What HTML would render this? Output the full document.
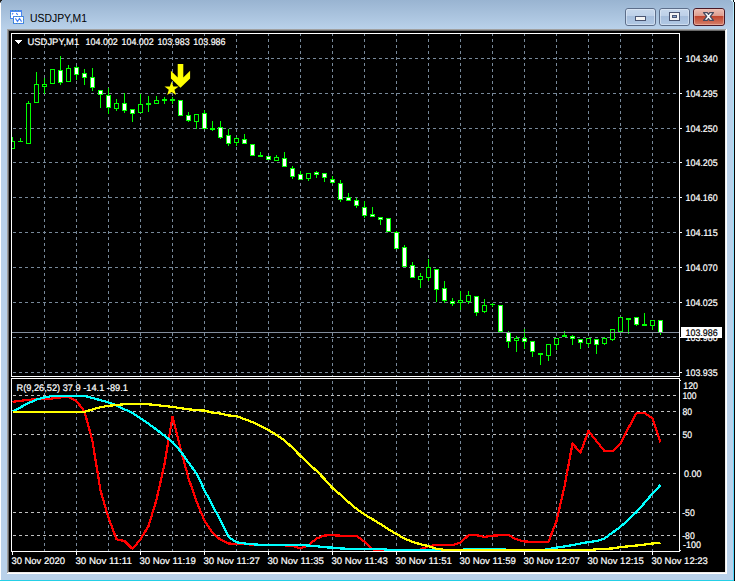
<!DOCTYPE html>
<html><head><meta charset="utf-8"><title>USDJPY,M1</title>
<style>html,body{margin:0;padding:0;background:#fff;overflow:hidden}svg{display:block}text{font-family:"Liberation Sans",sans-serif}</style></head>
<body>
<svg width="737" height="581" viewBox="0 0 737 581" shape-rendering="crispEdges" text-rendering="geometricPrecision">
<defs><linearGradient id="tg" x1="0" y1="0" x2="0" y2="1"><stop offset="0" stop-color="#99b4d1"/><stop offset="1" stop-color="#b9d1ea"/></linearGradient><linearGradient id="bt" x1="0" y1="0" x2="0" y2="1"><stop offset="0" stop-color="#c8d9ed"/><stop offset="0.45" stop-color="#bdd0e8"/><stop offset="0.46" stop-color="#a6bedc"/><stop offset="1" stop-color="#b2c9e5"/></linearGradient><linearGradient id="cl" x1="0" y1="0" x2="0" y2="1"><stop offset="0" stop-color="#edc1b7"/><stop offset="0.45" stop-color="#dd9b8c"/><stop offset="0.46" stop-color="#c1442c"/><stop offset="1" stop-color="#d6846f"/></linearGradient></defs>
<rect x="0" y="0" width="737" height="581" fill="#ffffff"/>
<rect x="0" y="0" width="734" height="581" fill="#b9d1ea"/>
<rect x="0" y="0" width="734" height="29" fill="url(#tg)"/>
<rect x="0" y="2" width="1" height="579" fill="#ffffff"/>
<rect x="0" y="0" width="2" height="1" fill="#202020"/>
<rect x="0" y="1" width="1" height="1" fill="#202020"/>
<rect x="0" y="2" width="1" height="1" fill="#8a8a8a"/>
<linearGradient id="cy" x1="0" y1="0" x2="0" y2="1"><stop offset="0" stop-color="#b8ecfd"/><stop offset="0.5" stop-color="#7fdffc"/><stop offset="1" stop-color="#4fd6fb"/></linearGradient>
<rect x="733" y="2" width="1" height="578" fill="url(#cy)"/>
<rect x="734" y="0" width="3" height="581" fill="#ffffff"/>
<rect x="734" y="2" width="1" height="579" fill="#0a0505"/>
<rect x="733" y="0" width="1" height="2" fill="#0a1a20"/>
<rect x="731" y="0" width="2" height="1" fill="#d8f4fd"/>
<rect x="732" y="1" width="1" height="1" fill="#d8f4fd"/>
<rect x="0" y="580" width="734" height="1" fill="#25cfe6"/>
<rect x="7" y="29" width="720" height="545" fill="#ffffff"/>
<rect x="7" y="29" width="719" height="544" fill="#a0a0a0"/>
<rect x="8" y="30" width="718" height="543" fill="#ececec"/>
<rect x="8" y="30" width="717" height="542" fill="#696969"/>
<rect x="9" y="31" width="716" height="541" fill="#000000"/>
<path d="M13 58h3v1h-3zM19 58h3v1h-3zM25 58h3v1h-3zM31 58h3v1h-3zM37 58h3v1h-3zM43 58h3v1h-3zM49 58h3v1h-3zM55 58h3v1h-3zM61 58h3v1h-3zM67 58h3v1h-3zM73 58h3v1h-3zM79 58h3v1h-3zM85 58h3v1h-3zM91 58h3v1h-3zM97 58h3v1h-3zM103 58h3v1h-3zM109 58h3v1h-3zM115 58h3v1h-3zM121 58h3v1h-3zM127 58h3v1h-3zM133 58h3v1h-3zM139 58h3v1h-3zM145 58h3v1h-3zM151 58h3v1h-3zM157 58h3v1h-3zM163 58h3v1h-3zM169 58h3v1h-3zM175 58h3v1h-3zM181 58h3v1h-3zM187 58h3v1h-3zM193 58h3v1h-3zM199 58h3v1h-3zM205 58h3v1h-3zM211 58h3v1h-3zM217 58h3v1h-3zM223 58h3v1h-3zM229 58h3v1h-3zM235 58h3v1h-3zM241 58h3v1h-3zM247 58h3v1h-3zM253 58h3v1h-3zM259 58h3v1h-3zM265 58h3v1h-3zM271 58h3v1h-3zM277 58h3v1h-3zM283 58h3v1h-3zM289 58h3v1h-3zM295 58h3v1h-3zM301 58h3v1h-3zM307 58h3v1h-3zM313 58h3v1h-3zM319 58h3v1h-3zM325 58h3v1h-3zM331 58h3v1h-3zM337 58h3v1h-3zM343 58h3v1h-3zM349 58h3v1h-3zM355 58h3v1h-3zM361 58h3v1h-3zM367 58h3v1h-3zM373 58h3v1h-3zM379 58h3v1h-3zM385 58h3v1h-3zM391 58h3v1h-3zM397 58h3v1h-3zM403 58h3v1h-3zM409 58h3v1h-3zM415 58h3v1h-3zM421 58h3v1h-3zM427 58h3v1h-3zM433 58h3v1h-3zM439 58h3v1h-3zM445 58h3v1h-3zM451 58h3v1h-3zM457 58h3v1h-3zM463 58h3v1h-3zM469 58h3v1h-3zM475 58h3v1h-3zM481 58h3v1h-3zM487 58h3v1h-3zM493 58h3v1h-3zM499 58h3v1h-3zM505 58h3v1h-3zM511 58h3v1h-3zM517 58h3v1h-3zM523 58h3v1h-3zM529 58h3v1h-3zM535 58h3v1h-3zM541 58h3v1h-3zM547 58h3v1h-3zM553 58h3v1h-3zM559 58h3v1h-3zM565 58h3v1h-3zM571 58h3v1h-3zM577 58h3v1h-3zM583 58h3v1h-3zM589 58h3v1h-3zM595 58h3v1h-3zM601 58h3v1h-3zM607 58h3v1h-3zM613 58h3v1h-3zM619 58h3v1h-3zM625 58h3v1h-3zM631 58h3v1h-3zM637 58h3v1h-3zM643 58h3v1h-3zM649 58h3v1h-3zM655 58h3v1h-3zM661 58h3v1h-3zM667 58h3v1h-3zM673 58h3v1h-3z" fill="#778899"/>
<path d="M13 93h3v1h-3zM19 93h3v1h-3zM25 93h3v1h-3zM31 93h3v1h-3zM37 93h3v1h-3zM43 93h3v1h-3zM49 93h3v1h-3zM55 93h3v1h-3zM61 93h3v1h-3zM67 93h3v1h-3zM73 93h3v1h-3zM79 93h3v1h-3zM85 93h3v1h-3zM91 93h3v1h-3zM97 93h3v1h-3zM103 93h3v1h-3zM109 93h3v1h-3zM115 93h3v1h-3zM121 93h3v1h-3zM127 93h3v1h-3zM133 93h3v1h-3zM139 93h3v1h-3zM145 93h3v1h-3zM151 93h3v1h-3zM157 93h3v1h-3zM163 93h3v1h-3zM169 93h3v1h-3zM175 93h3v1h-3zM181 93h3v1h-3zM187 93h3v1h-3zM193 93h3v1h-3zM199 93h3v1h-3zM205 93h3v1h-3zM211 93h3v1h-3zM217 93h3v1h-3zM223 93h3v1h-3zM229 93h3v1h-3zM235 93h3v1h-3zM241 93h3v1h-3zM247 93h3v1h-3zM253 93h3v1h-3zM259 93h3v1h-3zM265 93h3v1h-3zM271 93h3v1h-3zM277 93h3v1h-3zM283 93h3v1h-3zM289 93h3v1h-3zM295 93h3v1h-3zM301 93h3v1h-3zM307 93h3v1h-3zM313 93h3v1h-3zM319 93h3v1h-3zM325 93h3v1h-3zM331 93h3v1h-3zM337 93h3v1h-3zM343 93h3v1h-3zM349 93h3v1h-3zM355 93h3v1h-3zM361 93h3v1h-3zM367 93h3v1h-3zM373 93h3v1h-3zM379 93h3v1h-3zM385 93h3v1h-3zM391 93h3v1h-3zM397 93h3v1h-3zM403 93h3v1h-3zM409 93h3v1h-3zM415 93h3v1h-3zM421 93h3v1h-3zM427 93h3v1h-3zM433 93h3v1h-3zM439 93h3v1h-3zM445 93h3v1h-3zM451 93h3v1h-3zM457 93h3v1h-3zM463 93h3v1h-3zM469 93h3v1h-3zM475 93h3v1h-3zM481 93h3v1h-3zM487 93h3v1h-3zM493 93h3v1h-3zM499 93h3v1h-3zM505 93h3v1h-3zM511 93h3v1h-3zM517 93h3v1h-3zM523 93h3v1h-3zM529 93h3v1h-3zM535 93h3v1h-3zM541 93h3v1h-3zM547 93h3v1h-3zM553 93h3v1h-3zM559 93h3v1h-3zM565 93h3v1h-3zM571 93h3v1h-3zM577 93h3v1h-3zM583 93h3v1h-3zM589 93h3v1h-3zM595 93h3v1h-3zM601 93h3v1h-3zM607 93h3v1h-3zM613 93h3v1h-3zM619 93h3v1h-3zM625 93h3v1h-3zM631 93h3v1h-3zM637 93h3v1h-3zM643 93h3v1h-3zM649 93h3v1h-3zM655 93h3v1h-3zM661 93h3v1h-3zM667 93h3v1h-3zM673 93h3v1h-3z" fill="#778899"/>
<path d="M13 128h3v1h-3zM19 128h3v1h-3zM25 128h3v1h-3zM31 128h3v1h-3zM37 128h3v1h-3zM43 128h3v1h-3zM49 128h3v1h-3zM55 128h3v1h-3zM61 128h3v1h-3zM67 128h3v1h-3zM73 128h3v1h-3zM79 128h3v1h-3zM85 128h3v1h-3zM91 128h3v1h-3zM97 128h3v1h-3zM103 128h3v1h-3zM109 128h3v1h-3zM115 128h3v1h-3zM121 128h3v1h-3zM127 128h3v1h-3zM133 128h3v1h-3zM139 128h3v1h-3zM145 128h3v1h-3zM151 128h3v1h-3zM157 128h3v1h-3zM163 128h3v1h-3zM169 128h3v1h-3zM175 128h3v1h-3zM181 128h3v1h-3zM187 128h3v1h-3zM193 128h3v1h-3zM199 128h3v1h-3zM205 128h3v1h-3zM211 128h3v1h-3zM217 128h3v1h-3zM223 128h3v1h-3zM229 128h3v1h-3zM235 128h3v1h-3zM241 128h3v1h-3zM247 128h3v1h-3zM253 128h3v1h-3zM259 128h3v1h-3zM265 128h3v1h-3zM271 128h3v1h-3zM277 128h3v1h-3zM283 128h3v1h-3zM289 128h3v1h-3zM295 128h3v1h-3zM301 128h3v1h-3zM307 128h3v1h-3zM313 128h3v1h-3zM319 128h3v1h-3zM325 128h3v1h-3zM331 128h3v1h-3zM337 128h3v1h-3zM343 128h3v1h-3zM349 128h3v1h-3zM355 128h3v1h-3zM361 128h3v1h-3zM367 128h3v1h-3zM373 128h3v1h-3zM379 128h3v1h-3zM385 128h3v1h-3zM391 128h3v1h-3zM397 128h3v1h-3zM403 128h3v1h-3zM409 128h3v1h-3zM415 128h3v1h-3zM421 128h3v1h-3zM427 128h3v1h-3zM433 128h3v1h-3zM439 128h3v1h-3zM445 128h3v1h-3zM451 128h3v1h-3zM457 128h3v1h-3zM463 128h3v1h-3zM469 128h3v1h-3zM475 128h3v1h-3zM481 128h3v1h-3zM487 128h3v1h-3zM493 128h3v1h-3zM499 128h3v1h-3zM505 128h3v1h-3zM511 128h3v1h-3zM517 128h3v1h-3zM523 128h3v1h-3zM529 128h3v1h-3zM535 128h3v1h-3zM541 128h3v1h-3zM547 128h3v1h-3zM553 128h3v1h-3zM559 128h3v1h-3zM565 128h3v1h-3zM571 128h3v1h-3zM577 128h3v1h-3zM583 128h3v1h-3zM589 128h3v1h-3zM595 128h3v1h-3zM601 128h3v1h-3zM607 128h3v1h-3zM613 128h3v1h-3zM619 128h3v1h-3zM625 128h3v1h-3zM631 128h3v1h-3zM637 128h3v1h-3zM643 128h3v1h-3zM649 128h3v1h-3zM655 128h3v1h-3zM661 128h3v1h-3zM667 128h3v1h-3zM673 128h3v1h-3z" fill="#778899"/>
<path d="M13 162h3v1h-3zM19 162h3v1h-3zM25 162h3v1h-3zM31 162h3v1h-3zM37 162h3v1h-3zM43 162h3v1h-3zM49 162h3v1h-3zM55 162h3v1h-3zM61 162h3v1h-3zM67 162h3v1h-3zM73 162h3v1h-3zM79 162h3v1h-3zM85 162h3v1h-3zM91 162h3v1h-3zM97 162h3v1h-3zM103 162h3v1h-3zM109 162h3v1h-3zM115 162h3v1h-3zM121 162h3v1h-3zM127 162h3v1h-3zM133 162h3v1h-3zM139 162h3v1h-3zM145 162h3v1h-3zM151 162h3v1h-3zM157 162h3v1h-3zM163 162h3v1h-3zM169 162h3v1h-3zM175 162h3v1h-3zM181 162h3v1h-3zM187 162h3v1h-3zM193 162h3v1h-3zM199 162h3v1h-3zM205 162h3v1h-3zM211 162h3v1h-3zM217 162h3v1h-3zM223 162h3v1h-3zM229 162h3v1h-3zM235 162h3v1h-3zM241 162h3v1h-3zM247 162h3v1h-3zM253 162h3v1h-3zM259 162h3v1h-3zM265 162h3v1h-3zM271 162h3v1h-3zM277 162h3v1h-3zM283 162h3v1h-3zM289 162h3v1h-3zM295 162h3v1h-3zM301 162h3v1h-3zM307 162h3v1h-3zM313 162h3v1h-3zM319 162h3v1h-3zM325 162h3v1h-3zM331 162h3v1h-3zM337 162h3v1h-3zM343 162h3v1h-3zM349 162h3v1h-3zM355 162h3v1h-3zM361 162h3v1h-3zM367 162h3v1h-3zM373 162h3v1h-3zM379 162h3v1h-3zM385 162h3v1h-3zM391 162h3v1h-3zM397 162h3v1h-3zM403 162h3v1h-3zM409 162h3v1h-3zM415 162h3v1h-3zM421 162h3v1h-3zM427 162h3v1h-3zM433 162h3v1h-3zM439 162h3v1h-3zM445 162h3v1h-3zM451 162h3v1h-3zM457 162h3v1h-3zM463 162h3v1h-3zM469 162h3v1h-3zM475 162h3v1h-3zM481 162h3v1h-3zM487 162h3v1h-3zM493 162h3v1h-3zM499 162h3v1h-3zM505 162h3v1h-3zM511 162h3v1h-3zM517 162h3v1h-3zM523 162h3v1h-3zM529 162h3v1h-3zM535 162h3v1h-3zM541 162h3v1h-3zM547 162h3v1h-3zM553 162h3v1h-3zM559 162h3v1h-3zM565 162h3v1h-3zM571 162h3v1h-3zM577 162h3v1h-3zM583 162h3v1h-3zM589 162h3v1h-3zM595 162h3v1h-3zM601 162h3v1h-3zM607 162h3v1h-3zM613 162h3v1h-3zM619 162h3v1h-3zM625 162h3v1h-3zM631 162h3v1h-3zM637 162h3v1h-3zM643 162h3v1h-3zM649 162h3v1h-3zM655 162h3v1h-3zM661 162h3v1h-3zM667 162h3v1h-3zM673 162h3v1h-3z" fill="#778899"/>
<path d="M13 197h3v1h-3zM19 197h3v1h-3zM25 197h3v1h-3zM31 197h3v1h-3zM37 197h3v1h-3zM43 197h3v1h-3zM49 197h3v1h-3zM55 197h3v1h-3zM61 197h3v1h-3zM67 197h3v1h-3zM73 197h3v1h-3zM79 197h3v1h-3zM85 197h3v1h-3zM91 197h3v1h-3zM97 197h3v1h-3zM103 197h3v1h-3zM109 197h3v1h-3zM115 197h3v1h-3zM121 197h3v1h-3zM127 197h3v1h-3zM133 197h3v1h-3zM139 197h3v1h-3zM145 197h3v1h-3zM151 197h3v1h-3zM157 197h3v1h-3zM163 197h3v1h-3zM169 197h3v1h-3zM175 197h3v1h-3zM181 197h3v1h-3zM187 197h3v1h-3zM193 197h3v1h-3zM199 197h3v1h-3zM205 197h3v1h-3zM211 197h3v1h-3zM217 197h3v1h-3zM223 197h3v1h-3zM229 197h3v1h-3zM235 197h3v1h-3zM241 197h3v1h-3zM247 197h3v1h-3zM253 197h3v1h-3zM259 197h3v1h-3zM265 197h3v1h-3zM271 197h3v1h-3zM277 197h3v1h-3zM283 197h3v1h-3zM289 197h3v1h-3zM295 197h3v1h-3zM301 197h3v1h-3zM307 197h3v1h-3zM313 197h3v1h-3zM319 197h3v1h-3zM325 197h3v1h-3zM331 197h3v1h-3zM337 197h3v1h-3zM343 197h3v1h-3zM349 197h3v1h-3zM355 197h3v1h-3zM361 197h3v1h-3zM367 197h3v1h-3zM373 197h3v1h-3zM379 197h3v1h-3zM385 197h3v1h-3zM391 197h3v1h-3zM397 197h3v1h-3zM403 197h3v1h-3zM409 197h3v1h-3zM415 197h3v1h-3zM421 197h3v1h-3zM427 197h3v1h-3zM433 197h3v1h-3zM439 197h3v1h-3zM445 197h3v1h-3zM451 197h3v1h-3zM457 197h3v1h-3zM463 197h3v1h-3zM469 197h3v1h-3zM475 197h3v1h-3zM481 197h3v1h-3zM487 197h3v1h-3zM493 197h3v1h-3zM499 197h3v1h-3zM505 197h3v1h-3zM511 197h3v1h-3zM517 197h3v1h-3zM523 197h3v1h-3zM529 197h3v1h-3zM535 197h3v1h-3zM541 197h3v1h-3zM547 197h3v1h-3zM553 197h3v1h-3zM559 197h3v1h-3zM565 197h3v1h-3zM571 197h3v1h-3zM577 197h3v1h-3zM583 197h3v1h-3zM589 197h3v1h-3zM595 197h3v1h-3zM601 197h3v1h-3zM607 197h3v1h-3zM613 197h3v1h-3zM619 197h3v1h-3zM625 197h3v1h-3zM631 197h3v1h-3zM637 197h3v1h-3zM643 197h3v1h-3zM649 197h3v1h-3zM655 197h3v1h-3zM661 197h3v1h-3zM667 197h3v1h-3zM673 197h3v1h-3z" fill="#778899"/>
<path d="M13 232h3v1h-3zM19 232h3v1h-3zM25 232h3v1h-3zM31 232h3v1h-3zM37 232h3v1h-3zM43 232h3v1h-3zM49 232h3v1h-3zM55 232h3v1h-3zM61 232h3v1h-3zM67 232h3v1h-3zM73 232h3v1h-3zM79 232h3v1h-3zM85 232h3v1h-3zM91 232h3v1h-3zM97 232h3v1h-3zM103 232h3v1h-3zM109 232h3v1h-3zM115 232h3v1h-3zM121 232h3v1h-3zM127 232h3v1h-3zM133 232h3v1h-3zM139 232h3v1h-3zM145 232h3v1h-3zM151 232h3v1h-3zM157 232h3v1h-3zM163 232h3v1h-3zM169 232h3v1h-3zM175 232h3v1h-3zM181 232h3v1h-3zM187 232h3v1h-3zM193 232h3v1h-3zM199 232h3v1h-3zM205 232h3v1h-3zM211 232h3v1h-3zM217 232h3v1h-3zM223 232h3v1h-3zM229 232h3v1h-3zM235 232h3v1h-3zM241 232h3v1h-3zM247 232h3v1h-3zM253 232h3v1h-3zM259 232h3v1h-3zM265 232h3v1h-3zM271 232h3v1h-3zM277 232h3v1h-3zM283 232h3v1h-3zM289 232h3v1h-3zM295 232h3v1h-3zM301 232h3v1h-3zM307 232h3v1h-3zM313 232h3v1h-3zM319 232h3v1h-3zM325 232h3v1h-3zM331 232h3v1h-3zM337 232h3v1h-3zM343 232h3v1h-3zM349 232h3v1h-3zM355 232h3v1h-3zM361 232h3v1h-3zM367 232h3v1h-3zM373 232h3v1h-3zM379 232h3v1h-3zM385 232h3v1h-3zM391 232h3v1h-3zM397 232h3v1h-3zM403 232h3v1h-3zM409 232h3v1h-3zM415 232h3v1h-3zM421 232h3v1h-3zM427 232h3v1h-3zM433 232h3v1h-3zM439 232h3v1h-3zM445 232h3v1h-3zM451 232h3v1h-3zM457 232h3v1h-3zM463 232h3v1h-3zM469 232h3v1h-3zM475 232h3v1h-3zM481 232h3v1h-3zM487 232h3v1h-3zM493 232h3v1h-3zM499 232h3v1h-3zM505 232h3v1h-3zM511 232h3v1h-3zM517 232h3v1h-3zM523 232h3v1h-3zM529 232h3v1h-3zM535 232h3v1h-3zM541 232h3v1h-3zM547 232h3v1h-3zM553 232h3v1h-3zM559 232h3v1h-3zM565 232h3v1h-3zM571 232h3v1h-3zM577 232h3v1h-3zM583 232h3v1h-3zM589 232h3v1h-3zM595 232h3v1h-3zM601 232h3v1h-3zM607 232h3v1h-3zM613 232h3v1h-3zM619 232h3v1h-3zM625 232h3v1h-3zM631 232h3v1h-3zM637 232h3v1h-3zM643 232h3v1h-3zM649 232h3v1h-3zM655 232h3v1h-3zM661 232h3v1h-3zM667 232h3v1h-3zM673 232h3v1h-3z" fill="#778899"/>
<path d="M13 267h3v1h-3zM19 267h3v1h-3zM25 267h3v1h-3zM31 267h3v1h-3zM37 267h3v1h-3zM43 267h3v1h-3zM49 267h3v1h-3zM55 267h3v1h-3zM61 267h3v1h-3zM67 267h3v1h-3zM73 267h3v1h-3zM79 267h3v1h-3zM85 267h3v1h-3zM91 267h3v1h-3zM97 267h3v1h-3zM103 267h3v1h-3zM109 267h3v1h-3zM115 267h3v1h-3zM121 267h3v1h-3zM127 267h3v1h-3zM133 267h3v1h-3zM139 267h3v1h-3zM145 267h3v1h-3zM151 267h3v1h-3zM157 267h3v1h-3zM163 267h3v1h-3zM169 267h3v1h-3zM175 267h3v1h-3zM181 267h3v1h-3zM187 267h3v1h-3zM193 267h3v1h-3zM199 267h3v1h-3zM205 267h3v1h-3zM211 267h3v1h-3zM217 267h3v1h-3zM223 267h3v1h-3zM229 267h3v1h-3zM235 267h3v1h-3zM241 267h3v1h-3zM247 267h3v1h-3zM253 267h3v1h-3zM259 267h3v1h-3zM265 267h3v1h-3zM271 267h3v1h-3zM277 267h3v1h-3zM283 267h3v1h-3zM289 267h3v1h-3zM295 267h3v1h-3zM301 267h3v1h-3zM307 267h3v1h-3zM313 267h3v1h-3zM319 267h3v1h-3zM325 267h3v1h-3zM331 267h3v1h-3zM337 267h3v1h-3zM343 267h3v1h-3zM349 267h3v1h-3zM355 267h3v1h-3zM361 267h3v1h-3zM367 267h3v1h-3zM373 267h3v1h-3zM379 267h3v1h-3zM385 267h3v1h-3zM391 267h3v1h-3zM397 267h3v1h-3zM403 267h3v1h-3zM409 267h3v1h-3zM415 267h3v1h-3zM421 267h3v1h-3zM427 267h3v1h-3zM433 267h3v1h-3zM439 267h3v1h-3zM445 267h3v1h-3zM451 267h3v1h-3zM457 267h3v1h-3zM463 267h3v1h-3zM469 267h3v1h-3zM475 267h3v1h-3zM481 267h3v1h-3zM487 267h3v1h-3zM493 267h3v1h-3zM499 267h3v1h-3zM505 267h3v1h-3zM511 267h3v1h-3zM517 267h3v1h-3zM523 267h3v1h-3zM529 267h3v1h-3zM535 267h3v1h-3zM541 267h3v1h-3zM547 267h3v1h-3zM553 267h3v1h-3zM559 267h3v1h-3zM565 267h3v1h-3zM571 267h3v1h-3zM577 267h3v1h-3zM583 267h3v1h-3zM589 267h3v1h-3zM595 267h3v1h-3zM601 267h3v1h-3zM607 267h3v1h-3zM613 267h3v1h-3zM619 267h3v1h-3zM625 267h3v1h-3zM631 267h3v1h-3zM637 267h3v1h-3zM643 267h3v1h-3zM649 267h3v1h-3zM655 267h3v1h-3zM661 267h3v1h-3zM667 267h3v1h-3zM673 267h3v1h-3z" fill="#778899"/>
<path d="M13 302h3v1h-3zM19 302h3v1h-3zM25 302h3v1h-3zM31 302h3v1h-3zM37 302h3v1h-3zM43 302h3v1h-3zM49 302h3v1h-3zM55 302h3v1h-3zM61 302h3v1h-3zM67 302h3v1h-3zM73 302h3v1h-3zM79 302h3v1h-3zM85 302h3v1h-3zM91 302h3v1h-3zM97 302h3v1h-3zM103 302h3v1h-3zM109 302h3v1h-3zM115 302h3v1h-3zM121 302h3v1h-3zM127 302h3v1h-3zM133 302h3v1h-3zM139 302h3v1h-3zM145 302h3v1h-3zM151 302h3v1h-3zM157 302h3v1h-3zM163 302h3v1h-3zM169 302h3v1h-3zM175 302h3v1h-3zM181 302h3v1h-3zM187 302h3v1h-3zM193 302h3v1h-3zM199 302h3v1h-3zM205 302h3v1h-3zM211 302h3v1h-3zM217 302h3v1h-3zM223 302h3v1h-3zM229 302h3v1h-3zM235 302h3v1h-3zM241 302h3v1h-3zM247 302h3v1h-3zM253 302h3v1h-3zM259 302h3v1h-3zM265 302h3v1h-3zM271 302h3v1h-3zM277 302h3v1h-3zM283 302h3v1h-3zM289 302h3v1h-3zM295 302h3v1h-3zM301 302h3v1h-3zM307 302h3v1h-3zM313 302h3v1h-3zM319 302h3v1h-3zM325 302h3v1h-3zM331 302h3v1h-3zM337 302h3v1h-3zM343 302h3v1h-3zM349 302h3v1h-3zM355 302h3v1h-3zM361 302h3v1h-3zM367 302h3v1h-3zM373 302h3v1h-3zM379 302h3v1h-3zM385 302h3v1h-3zM391 302h3v1h-3zM397 302h3v1h-3zM403 302h3v1h-3zM409 302h3v1h-3zM415 302h3v1h-3zM421 302h3v1h-3zM427 302h3v1h-3zM433 302h3v1h-3zM439 302h3v1h-3zM445 302h3v1h-3zM451 302h3v1h-3zM457 302h3v1h-3zM463 302h3v1h-3zM469 302h3v1h-3zM475 302h3v1h-3zM481 302h3v1h-3zM487 302h3v1h-3zM493 302h3v1h-3zM499 302h3v1h-3zM505 302h3v1h-3zM511 302h3v1h-3zM517 302h3v1h-3zM523 302h3v1h-3zM529 302h3v1h-3zM535 302h3v1h-3zM541 302h3v1h-3zM547 302h3v1h-3zM553 302h3v1h-3zM559 302h3v1h-3zM565 302h3v1h-3zM571 302h3v1h-3zM577 302h3v1h-3zM583 302h3v1h-3zM589 302h3v1h-3zM595 302h3v1h-3zM601 302h3v1h-3zM607 302h3v1h-3zM613 302h3v1h-3zM619 302h3v1h-3zM625 302h3v1h-3zM631 302h3v1h-3zM637 302h3v1h-3zM643 302h3v1h-3zM649 302h3v1h-3zM655 302h3v1h-3zM661 302h3v1h-3zM667 302h3v1h-3zM673 302h3v1h-3z" fill="#778899"/>
<path d="M13 337h3v1h-3zM19 337h3v1h-3zM25 337h3v1h-3zM31 337h3v1h-3zM37 337h3v1h-3zM43 337h3v1h-3zM49 337h3v1h-3zM55 337h3v1h-3zM61 337h3v1h-3zM67 337h3v1h-3zM73 337h3v1h-3zM79 337h3v1h-3zM85 337h3v1h-3zM91 337h3v1h-3zM97 337h3v1h-3zM103 337h3v1h-3zM109 337h3v1h-3zM115 337h3v1h-3zM121 337h3v1h-3zM127 337h3v1h-3zM133 337h3v1h-3zM139 337h3v1h-3zM145 337h3v1h-3zM151 337h3v1h-3zM157 337h3v1h-3zM163 337h3v1h-3zM169 337h3v1h-3zM175 337h3v1h-3zM181 337h3v1h-3zM187 337h3v1h-3zM193 337h3v1h-3zM199 337h3v1h-3zM205 337h3v1h-3zM211 337h3v1h-3zM217 337h3v1h-3zM223 337h3v1h-3zM229 337h3v1h-3zM235 337h3v1h-3zM241 337h3v1h-3zM247 337h3v1h-3zM253 337h3v1h-3zM259 337h3v1h-3zM265 337h3v1h-3zM271 337h3v1h-3zM277 337h3v1h-3zM283 337h3v1h-3zM289 337h3v1h-3zM295 337h3v1h-3zM301 337h3v1h-3zM307 337h3v1h-3zM313 337h3v1h-3zM319 337h3v1h-3zM325 337h3v1h-3zM331 337h3v1h-3zM337 337h3v1h-3zM343 337h3v1h-3zM349 337h3v1h-3zM355 337h3v1h-3zM361 337h3v1h-3zM367 337h3v1h-3zM373 337h3v1h-3zM379 337h3v1h-3zM385 337h3v1h-3zM391 337h3v1h-3zM397 337h3v1h-3zM403 337h3v1h-3zM409 337h3v1h-3zM415 337h3v1h-3zM421 337h3v1h-3zM427 337h3v1h-3zM433 337h3v1h-3zM439 337h3v1h-3zM445 337h3v1h-3zM451 337h3v1h-3zM457 337h3v1h-3zM463 337h3v1h-3zM469 337h3v1h-3zM475 337h3v1h-3zM481 337h3v1h-3zM487 337h3v1h-3zM493 337h3v1h-3zM499 337h3v1h-3zM505 337h3v1h-3zM511 337h3v1h-3zM517 337h3v1h-3zM523 337h3v1h-3zM529 337h3v1h-3zM535 337h3v1h-3zM541 337h3v1h-3zM547 337h3v1h-3zM553 337h3v1h-3zM559 337h3v1h-3zM565 337h3v1h-3zM571 337h3v1h-3zM577 337h3v1h-3zM583 337h3v1h-3zM589 337h3v1h-3zM595 337h3v1h-3zM601 337h3v1h-3zM607 337h3v1h-3zM613 337h3v1h-3zM619 337h3v1h-3zM625 337h3v1h-3zM631 337h3v1h-3zM637 337h3v1h-3zM643 337h3v1h-3zM649 337h3v1h-3zM655 337h3v1h-3zM661 337h3v1h-3zM667 337h3v1h-3zM673 337h3v1h-3z" fill="#778899"/>
<path d="M13 372h3v1h-3zM19 372h3v1h-3zM25 372h3v1h-3zM31 372h3v1h-3zM37 372h3v1h-3zM43 372h3v1h-3zM49 372h3v1h-3zM55 372h3v1h-3zM61 372h3v1h-3zM67 372h3v1h-3zM73 372h3v1h-3zM79 372h3v1h-3zM85 372h3v1h-3zM91 372h3v1h-3zM97 372h3v1h-3zM103 372h3v1h-3zM109 372h3v1h-3zM115 372h3v1h-3zM121 372h3v1h-3zM127 372h3v1h-3zM133 372h3v1h-3zM139 372h3v1h-3zM145 372h3v1h-3zM151 372h3v1h-3zM157 372h3v1h-3zM163 372h3v1h-3zM169 372h3v1h-3zM175 372h3v1h-3zM181 372h3v1h-3zM187 372h3v1h-3zM193 372h3v1h-3zM199 372h3v1h-3zM205 372h3v1h-3zM211 372h3v1h-3zM217 372h3v1h-3zM223 372h3v1h-3zM229 372h3v1h-3zM235 372h3v1h-3zM241 372h3v1h-3zM247 372h3v1h-3zM253 372h3v1h-3zM259 372h3v1h-3zM265 372h3v1h-3zM271 372h3v1h-3zM277 372h3v1h-3zM283 372h3v1h-3zM289 372h3v1h-3zM295 372h3v1h-3zM301 372h3v1h-3zM307 372h3v1h-3zM313 372h3v1h-3zM319 372h3v1h-3zM325 372h3v1h-3zM331 372h3v1h-3zM337 372h3v1h-3zM343 372h3v1h-3zM349 372h3v1h-3zM355 372h3v1h-3zM361 372h3v1h-3zM367 372h3v1h-3zM373 372h3v1h-3zM379 372h3v1h-3zM385 372h3v1h-3zM391 372h3v1h-3zM397 372h3v1h-3zM403 372h3v1h-3zM409 372h3v1h-3zM415 372h3v1h-3zM421 372h3v1h-3zM427 372h3v1h-3zM433 372h3v1h-3zM439 372h3v1h-3zM445 372h3v1h-3zM451 372h3v1h-3zM457 372h3v1h-3zM463 372h3v1h-3zM469 372h3v1h-3zM475 372h3v1h-3zM481 372h3v1h-3zM487 372h3v1h-3zM493 372h3v1h-3zM499 372h3v1h-3zM505 372h3v1h-3zM511 372h3v1h-3zM517 372h3v1h-3zM523 372h3v1h-3zM529 372h3v1h-3zM535 372h3v1h-3zM541 372h3v1h-3zM547 372h3v1h-3zM553 372h3v1h-3zM559 372h3v1h-3zM565 372h3v1h-3zM571 372h3v1h-3zM577 372h3v1h-3zM583 372h3v1h-3zM589 372h3v1h-3zM595 372h3v1h-3zM601 372h3v1h-3zM607 372h3v1h-3zM613 372h3v1h-3zM619 372h3v1h-3zM625 372h3v1h-3zM631 372h3v1h-3zM637 372h3v1h-3zM643 372h3v1h-3zM649 372h3v1h-3zM655 372h3v1h-3zM661 372h3v1h-3zM667 372h3v1h-3zM673 372h3v1h-3z" fill="#778899"/>
<path d="M44 34v2h1v-2zM44 39v3h1v-3zM44 45v3h1v-3zM44 51v3h1v-3zM44 57v3h1v-3zM44 63v3h1v-3zM44 69v3h1v-3zM44 75v3h1v-3zM44 81v3h1v-3zM44 87v3h1v-3zM44 93v3h1v-3zM44 99v3h1v-3zM44 105v3h1v-3zM44 111v3h1v-3zM44 117v3h1v-3zM44 123v3h1v-3zM44 129v3h1v-3zM44 135v3h1v-3zM44 141v3h1v-3zM44 147v3h1v-3zM44 153v3h1v-3zM44 159v3h1v-3zM44 165v3h1v-3zM44 171v3h1v-3zM44 177v3h1v-3zM44 183v3h1v-3zM44 189v3h1v-3zM44 195v3h1v-3zM44 201v3h1v-3zM44 207v3h1v-3zM44 213v3h1v-3zM44 219v3h1v-3zM44 225v3h1v-3zM44 231v3h1v-3zM44 237v3h1v-3zM44 243v3h1v-3zM44 249v3h1v-3zM44 255v3h1v-3zM44 261v3h1v-3zM44 267v3h1v-3zM44 273v3h1v-3zM44 279v3h1v-3zM44 285v3h1v-3zM44 291v3h1v-3zM44 297v3h1v-3zM44 303v3h1v-3zM44 309v3h1v-3zM44 315v3h1v-3zM44 321v3h1v-3zM44 327v3h1v-3zM44 333v3h1v-3zM44 339v3h1v-3zM44 345v3h1v-3zM44 351v3h1v-3zM44 357v3h1v-3zM44 363v3h1v-3zM44 369v3h1v-3zM44 375v1h1v-1z" fill="#778899"/>
<path d="M44 381v3h1v-3zM44 387v3h1v-3zM44 393v3h1v-3zM44 399v3h1v-3zM44 405v3h1v-3zM44 411v3h1v-3zM44 417v3h1v-3zM44 423v3h1v-3zM44 429v3h1v-3zM44 435v3h1v-3zM44 441v3h1v-3zM44 447v3h1v-3zM44 453v3h1v-3zM44 459v3h1v-3zM44 465v3h1v-3zM44 471v3h1v-3zM44 477v3h1v-3zM44 483v3h1v-3zM44 489v3h1v-3zM44 495v3h1v-3zM44 501v3h1v-3zM44 507v3h1v-3zM44 513v3h1v-3zM44 519v3h1v-3zM44 525v3h1v-3zM44 531v3h1v-3zM44 537v3h1v-3zM44 543v3h1v-3zM44 549v2h1v-2z" fill="#778899"/>
<path d="M76 34v2h1v-2zM76 39v3h1v-3zM76 45v3h1v-3zM76 51v3h1v-3zM76 57v3h1v-3zM76 63v3h1v-3zM76 69v3h1v-3zM76 75v3h1v-3zM76 81v3h1v-3zM76 87v3h1v-3zM76 93v3h1v-3zM76 99v3h1v-3zM76 105v3h1v-3zM76 111v3h1v-3zM76 117v3h1v-3zM76 123v3h1v-3zM76 129v3h1v-3zM76 135v3h1v-3zM76 141v3h1v-3zM76 147v3h1v-3zM76 153v3h1v-3zM76 159v3h1v-3zM76 165v3h1v-3zM76 171v3h1v-3zM76 177v3h1v-3zM76 183v3h1v-3zM76 189v3h1v-3zM76 195v3h1v-3zM76 201v3h1v-3zM76 207v3h1v-3zM76 213v3h1v-3zM76 219v3h1v-3zM76 225v3h1v-3zM76 231v3h1v-3zM76 237v3h1v-3zM76 243v3h1v-3zM76 249v3h1v-3zM76 255v3h1v-3zM76 261v3h1v-3zM76 267v3h1v-3zM76 273v3h1v-3zM76 279v3h1v-3zM76 285v3h1v-3zM76 291v3h1v-3zM76 297v3h1v-3zM76 303v3h1v-3zM76 309v3h1v-3zM76 315v3h1v-3zM76 321v3h1v-3zM76 327v3h1v-3zM76 333v3h1v-3zM76 339v3h1v-3zM76 345v3h1v-3zM76 351v3h1v-3zM76 357v3h1v-3zM76 363v3h1v-3zM76 369v3h1v-3zM76 375v1h1v-1z" fill="#778899"/>
<path d="M76 381v3h1v-3zM76 387v3h1v-3zM76 393v3h1v-3zM76 399v3h1v-3zM76 405v3h1v-3zM76 411v3h1v-3zM76 417v3h1v-3zM76 423v3h1v-3zM76 429v3h1v-3zM76 435v3h1v-3zM76 441v3h1v-3zM76 447v3h1v-3zM76 453v3h1v-3zM76 459v3h1v-3zM76 465v3h1v-3zM76 471v3h1v-3zM76 477v3h1v-3zM76 483v3h1v-3zM76 489v3h1v-3zM76 495v3h1v-3zM76 501v3h1v-3zM76 507v3h1v-3zM76 513v3h1v-3zM76 519v3h1v-3zM76 525v3h1v-3zM76 531v3h1v-3zM76 537v3h1v-3zM76 543v3h1v-3zM76 549v2h1v-2z" fill="#778899"/>
<path d="M108 34v2h1v-2zM108 39v3h1v-3zM108 45v3h1v-3zM108 51v3h1v-3zM108 57v3h1v-3zM108 63v3h1v-3zM108 69v3h1v-3zM108 75v3h1v-3zM108 81v3h1v-3zM108 87v3h1v-3zM108 93v3h1v-3zM108 99v3h1v-3zM108 105v3h1v-3zM108 111v3h1v-3zM108 117v3h1v-3zM108 123v3h1v-3zM108 129v3h1v-3zM108 135v3h1v-3zM108 141v3h1v-3zM108 147v3h1v-3zM108 153v3h1v-3zM108 159v3h1v-3zM108 165v3h1v-3zM108 171v3h1v-3zM108 177v3h1v-3zM108 183v3h1v-3zM108 189v3h1v-3zM108 195v3h1v-3zM108 201v3h1v-3zM108 207v3h1v-3zM108 213v3h1v-3zM108 219v3h1v-3zM108 225v3h1v-3zM108 231v3h1v-3zM108 237v3h1v-3zM108 243v3h1v-3zM108 249v3h1v-3zM108 255v3h1v-3zM108 261v3h1v-3zM108 267v3h1v-3zM108 273v3h1v-3zM108 279v3h1v-3zM108 285v3h1v-3zM108 291v3h1v-3zM108 297v3h1v-3zM108 303v3h1v-3zM108 309v3h1v-3zM108 315v3h1v-3zM108 321v3h1v-3zM108 327v3h1v-3zM108 333v3h1v-3zM108 339v3h1v-3zM108 345v3h1v-3zM108 351v3h1v-3zM108 357v3h1v-3zM108 363v3h1v-3zM108 369v3h1v-3zM108 375v1h1v-1z" fill="#778899"/>
<path d="M108 381v3h1v-3zM108 387v3h1v-3zM108 393v3h1v-3zM108 399v3h1v-3zM108 405v3h1v-3zM108 411v3h1v-3zM108 417v3h1v-3zM108 423v3h1v-3zM108 429v3h1v-3zM108 435v3h1v-3zM108 441v3h1v-3zM108 447v3h1v-3zM108 453v3h1v-3zM108 459v3h1v-3zM108 465v3h1v-3zM108 471v3h1v-3zM108 477v3h1v-3zM108 483v3h1v-3zM108 489v3h1v-3zM108 495v3h1v-3zM108 501v3h1v-3zM108 507v3h1v-3zM108 513v3h1v-3zM108 519v3h1v-3zM108 525v3h1v-3zM108 531v3h1v-3zM108 537v3h1v-3zM108 543v3h1v-3zM108 549v2h1v-2z" fill="#778899"/>
<path d="M140 34v2h1v-2zM140 39v3h1v-3zM140 45v3h1v-3zM140 51v3h1v-3zM140 57v3h1v-3zM140 63v3h1v-3zM140 69v3h1v-3zM140 75v3h1v-3zM140 81v3h1v-3zM140 87v3h1v-3zM140 93v3h1v-3zM140 99v3h1v-3zM140 105v3h1v-3zM140 111v3h1v-3zM140 117v3h1v-3zM140 123v3h1v-3zM140 129v3h1v-3zM140 135v3h1v-3zM140 141v3h1v-3zM140 147v3h1v-3zM140 153v3h1v-3zM140 159v3h1v-3zM140 165v3h1v-3zM140 171v3h1v-3zM140 177v3h1v-3zM140 183v3h1v-3zM140 189v3h1v-3zM140 195v3h1v-3zM140 201v3h1v-3zM140 207v3h1v-3zM140 213v3h1v-3zM140 219v3h1v-3zM140 225v3h1v-3zM140 231v3h1v-3zM140 237v3h1v-3zM140 243v3h1v-3zM140 249v3h1v-3zM140 255v3h1v-3zM140 261v3h1v-3zM140 267v3h1v-3zM140 273v3h1v-3zM140 279v3h1v-3zM140 285v3h1v-3zM140 291v3h1v-3zM140 297v3h1v-3zM140 303v3h1v-3zM140 309v3h1v-3zM140 315v3h1v-3zM140 321v3h1v-3zM140 327v3h1v-3zM140 333v3h1v-3zM140 339v3h1v-3zM140 345v3h1v-3zM140 351v3h1v-3zM140 357v3h1v-3zM140 363v3h1v-3zM140 369v3h1v-3zM140 375v1h1v-1z" fill="#778899"/>
<path d="M140 381v3h1v-3zM140 387v3h1v-3zM140 393v3h1v-3zM140 399v3h1v-3zM140 405v3h1v-3zM140 411v3h1v-3zM140 417v3h1v-3zM140 423v3h1v-3zM140 429v3h1v-3zM140 435v3h1v-3zM140 441v3h1v-3zM140 447v3h1v-3zM140 453v3h1v-3zM140 459v3h1v-3zM140 465v3h1v-3zM140 471v3h1v-3zM140 477v3h1v-3zM140 483v3h1v-3zM140 489v3h1v-3zM140 495v3h1v-3zM140 501v3h1v-3zM140 507v3h1v-3zM140 513v3h1v-3zM140 519v3h1v-3zM140 525v3h1v-3zM140 531v3h1v-3zM140 537v3h1v-3zM140 543v3h1v-3zM140 549v2h1v-2z" fill="#778899"/>
<path d="M172 34v2h1v-2zM172 39v3h1v-3zM172 45v3h1v-3zM172 51v3h1v-3zM172 57v3h1v-3zM172 63v3h1v-3zM172 69v3h1v-3zM172 75v3h1v-3zM172 81v3h1v-3zM172 87v3h1v-3zM172 93v3h1v-3zM172 99v3h1v-3zM172 105v3h1v-3zM172 111v3h1v-3zM172 117v3h1v-3zM172 123v3h1v-3zM172 129v3h1v-3zM172 135v3h1v-3zM172 141v3h1v-3zM172 147v3h1v-3zM172 153v3h1v-3zM172 159v3h1v-3zM172 165v3h1v-3zM172 171v3h1v-3zM172 177v3h1v-3zM172 183v3h1v-3zM172 189v3h1v-3zM172 195v3h1v-3zM172 201v3h1v-3zM172 207v3h1v-3zM172 213v3h1v-3zM172 219v3h1v-3zM172 225v3h1v-3zM172 231v3h1v-3zM172 237v3h1v-3zM172 243v3h1v-3zM172 249v3h1v-3zM172 255v3h1v-3zM172 261v3h1v-3zM172 267v3h1v-3zM172 273v3h1v-3zM172 279v3h1v-3zM172 285v3h1v-3zM172 291v3h1v-3zM172 297v3h1v-3zM172 303v3h1v-3zM172 309v3h1v-3zM172 315v3h1v-3zM172 321v3h1v-3zM172 327v3h1v-3zM172 333v3h1v-3zM172 339v3h1v-3zM172 345v3h1v-3zM172 351v3h1v-3zM172 357v3h1v-3zM172 363v3h1v-3zM172 369v3h1v-3zM172 375v1h1v-1z" fill="#778899"/>
<path d="M172 381v3h1v-3zM172 387v3h1v-3zM172 393v3h1v-3zM172 399v3h1v-3zM172 405v3h1v-3zM172 411v3h1v-3zM172 417v3h1v-3zM172 423v3h1v-3zM172 429v3h1v-3zM172 435v3h1v-3zM172 441v3h1v-3zM172 447v3h1v-3zM172 453v3h1v-3zM172 459v3h1v-3zM172 465v3h1v-3zM172 471v3h1v-3zM172 477v3h1v-3zM172 483v3h1v-3zM172 489v3h1v-3zM172 495v3h1v-3zM172 501v3h1v-3zM172 507v3h1v-3zM172 513v3h1v-3zM172 519v3h1v-3zM172 525v3h1v-3zM172 531v3h1v-3zM172 537v3h1v-3zM172 543v3h1v-3zM172 549v2h1v-2z" fill="#778899"/>
<path d="M204 34v2h1v-2zM204 39v3h1v-3zM204 45v3h1v-3zM204 51v3h1v-3zM204 57v3h1v-3zM204 63v3h1v-3zM204 69v3h1v-3zM204 75v3h1v-3zM204 81v3h1v-3zM204 87v3h1v-3zM204 93v3h1v-3zM204 99v3h1v-3zM204 105v3h1v-3zM204 111v3h1v-3zM204 117v3h1v-3zM204 123v3h1v-3zM204 129v3h1v-3zM204 135v3h1v-3zM204 141v3h1v-3zM204 147v3h1v-3zM204 153v3h1v-3zM204 159v3h1v-3zM204 165v3h1v-3zM204 171v3h1v-3zM204 177v3h1v-3zM204 183v3h1v-3zM204 189v3h1v-3zM204 195v3h1v-3zM204 201v3h1v-3zM204 207v3h1v-3zM204 213v3h1v-3zM204 219v3h1v-3zM204 225v3h1v-3zM204 231v3h1v-3zM204 237v3h1v-3zM204 243v3h1v-3zM204 249v3h1v-3zM204 255v3h1v-3zM204 261v3h1v-3zM204 267v3h1v-3zM204 273v3h1v-3zM204 279v3h1v-3zM204 285v3h1v-3zM204 291v3h1v-3zM204 297v3h1v-3zM204 303v3h1v-3zM204 309v3h1v-3zM204 315v3h1v-3zM204 321v3h1v-3zM204 327v3h1v-3zM204 333v3h1v-3zM204 339v3h1v-3zM204 345v3h1v-3zM204 351v3h1v-3zM204 357v3h1v-3zM204 363v3h1v-3zM204 369v3h1v-3zM204 375v1h1v-1z" fill="#778899"/>
<path d="M204 381v3h1v-3zM204 387v3h1v-3zM204 393v3h1v-3zM204 399v3h1v-3zM204 405v3h1v-3zM204 411v3h1v-3zM204 417v3h1v-3zM204 423v3h1v-3zM204 429v3h1v-3zM204 435v3h1v-3zM204 441v3h1v-3zM204 447v3h1v-3zM204 453v3h1v-3zM204 459v3h1v-3zM204 465v3h1v-3zM204 471v3h1v-3zM204 477v3h1v-3zM204 483v3h1v-3zM204 489v3h1v-3zM204 495v3h1v-3zM204 501v3h1v-3zM204 507v3h1v-3zM204 513v3h1v-3zM204 519v3h1v-3zM204 525v3h1v-3zM204 531v3h1v-3zM204 537v3h1v-3zM204 543v3h1v-3zM204 549v2h1v-2z" fill="#778899"/>
<path d="M236 34v2h1v-2zM236 39v3h1v-3zM236 45v3h1v-3zM236 51v3h1v-3zM236 57v3h1v-3zM236 63v3h1v-3zM236 69v3h1v-3zM236 75v3h1v-3zM236 81v3h1v-3zM236 87v3h1v-3zM236 93v3h1v-3zM236 99v3h1v-3zM236 105v3h1v-3zM236 111v3h1v-3zM236 117v3h1v-3zM236 123v3h1v-3zM236 129v3h1v-3zM236 135v3h1v-3zM236 141v3h1v-3zM236 147v3h1v-3zM236 153v3h1v-3zM236 159v3h1v-3zM236 165v3h1v-3zM236 171v3h1v-3zM236 177v3h1v-3zM236 183v3h1v-3zM236 189v3h1v-3zM236 195v3h1v-3zM236 201v3h1v-3zM236 207v3h1v-3zM236 213v3h1v-3zM236 219v3h1v-3zM236 225v3h1v-3zM236 231v3h1v-3zM236 237v3h1v-3zM236 243v3h1v-3zM236 249v3h1v-3zM236 255v3h1v-3zM236 261v3h1v-3zM236 267v3h1v-3zM236 273v3h1v-3zM236 279v3h1v-3zM236 285v3h1v-3zM236 291v3h1v-3zM236 297v3h1v-3zM236 303v3h1v-3zM236 309v3h1v-3zM236 315v3h1v-3zM236 321v3h1v-3zM236 327v3h1v-3zM236 333v3h1v-3zM236 339v3h1v-3zM236 345v3h1v-3zM236 351v3h1v-3zM236 357v3h1v-3zM236 363v3h1v-3zM236 369v3h1v-3zM236 375v1h1v-1z" fill="#778899"/>
<path d="M236 381v3h1v-3zM236 387v3h1v-3zM236 393v3h1v-3zM236 399v3h1v-3zM236 405v3h1v-3zM236 411v3h1v-3zM236 417v3h1v-3zM236 423v3h1v-3zM236 429v3h1v-3zM236 435v3h1v-3zM236 441v3h1v-3zM236 447v3h1v-3zM236 453v3h1v-3zM236 459v3h1v-3zM236 465v3h1v-3zM236 471v3h1v-3zM236 477v3h1v-3zM236 483v3h1v-3zM236 489v3h1v-3zM236 495v3h1v-3zM236 501v3h1v-3zM236 507v3h1v-3zM236 513v3h1v-3zM236 519v3h1v-3zM236 525v3h1v-3zM236 531v3h1v-3zM236 537v3h1v-3zM236 543v3h1v-3zM236 549v2h1v-2z" fill="#778899"/>
<path d="M268 34v2h1v-2zM268 39v3h1v-3zM268 45v3h1v-3zM268 51v3h1v-3zM268 57v3h1v-3zM268 63v3h1v-3zM268 69v3h1v-3zM268 75v3h1v-3zM268 81v3h1v-3zM268 87v3h1v-3zM268 93v3h1v-3zM268 99v3h1v-3zM268 105v3h1v-3zM268 111v3h1v-3zM268 117v3h1v-3zM268 123v3h1v-3zM268 129v3h1v-3zM268 135v3h1v-3zM268 141v3h1v-3zM268 147v3h1v-3zM268 153v3h1v-3zM268 159v3h1v-3zM268 165v3h1v-3zM268 171v3h1v-3zM268 177v3h1v-3zM268 183v3h1v-3zM268 189v3h1v-3zM268 195v3h1v-3zM268 201v3h1v-3zM268 207v3h1v-3zM268 213v3h1v-3zM268 219v3h1v-3zM268 225v3h1v-3zM268 231v3h1v-3zM268 237v3h1v-3zM268 243v3h1v-3zM268 249v3h1v-3zM268 255v3h1v-3zM268 261v3h1v-3zM268 267v3h1v-3zM268 273v3h1v-3zM268 279v3h1v-3zM268 285v3h1v-3zM268 291v3h1v-3zM268 297v3h1v-3zM268 303v3h1v-3zM268 309v3h1v-3zM268 315v3h1v-3zM268 321v3h1v-3zM268 327v3h1v-3zM268 333v3h1v-3zM268 339v3h1v-3zM268 345v3h1v-3zM268 351v3h1v-3zM268 357v3h1v-3zM268 363v3h1v-3zM268 369v3h1v-3zM268 375v1h1v-1z" fill="#778899"/>
<path d="M268 381v3h1v-3zM268 387v3h1v-3zM268 393v3h1v-3zM268 399v3h1v-3zM268 405v3h1v-3zM268 411v3h1v-3zM268 417v3h1v-3zM268 423v3h1v-3zM268 429v3h1v-3zM268 435v3h1v-3zM268 441v3h1v-3zM268 447v3h1v-3zM268 453v3h1v-3zM268 459v3h1v-3zM268 465v3h1v-3zM268 471v3h1v-3zM268 477v3h1v-3zM268 483v3h1v-3zM268 489v3h1v-3zM268 495v3h1v-3zM268 501v3h1v-3zM268 507v3h1v-3zM268 513v3h1v-3zM268 519v3h1v-3zM268 525v3h1v-3zM268 531v3h1v-3zM268 537v3h1v-3zM268 543v3h1v-3zM268 549v2h1v-2z" fill="#778899"/>
<path d="M300 34v2h1v-2zM300 39v3h1v-3zM300 45v3h1v-3zM300 51v3h1v-3zM300 57v3h1v-3zM300 63v3h1v-3zM300 69v3h1v-3zM300 75v3h1v-3zM300 81v3h1v-3zM300 87v3h1v-3zM300 93v3h1v-3zM300 99v3h1v-3zM300 105v3h1v-3zM300 111v3h1v-3zM300 117v3h1v-3zM300 123v3h1v-3zM300 129v3h1v-3zM300 135v3h1v-3zM300 141v3h1v-3zM300 147v3h1v-3zM300 153v3h1v-3zM300 159v3h1v-3zM300 165v3h1v-3zM300 171v3h1v-3zM300 177v3h1v-3zM300 183v3h1v-3zM300 189v3h1v-3zM300 195v3h1v-3zM300 201v3h1v-3zM300 207v3h1v-3zM300 213v3h1v-3zM300 219v3h1v-3zM300 225v3h1v-3zM300 231v3h1v-3zM300 237v3h1v-3zM300 243v3h1v-3zM300 249v3h1v-3zM300 255v3h1v-3zM300 261v3h1v-3zM300 267v3h1v-3zM300 273v3h1v-3zM300 279v3h1v-3zM300 285v3h1v-3zM300 291v3h1v-3zM300 297v3h1v-3zM300 303v3h1v-3zM300 309v3h1v-3zM300 315v3h1v-3zM300 321v3h1v-3zM300 327v3h1v-3zM300 333v3h1v-3zM300 339v3h1v-3zM300 345v3h1v-3zM300 351v3h1v-3zM300 357v3h1v-3zM300 363v3h1v-3zM300 369v3h1v-3zM300 375v1h1v-1z" fill="#778899"/>
<path d="M300 381v3h1v-3zM300 387v3h1v-3zM300 393v3h1v-3zM300 399v3h1v-3zM300 405v3h1v-3zM300 411v3h1v-3zM300 417v3h1v-3zM300 423v3h1v-3zM300 429v3h1v-3zM300 435v3h1v-3zM300 441v3h1v-3zM300 447v3h1v-3zM300 453v3h1v-3zM300 459v3h1v-3zM300 465v3h1v-3zM300 471v3h1v-3zM300 477v3h1v-3zM300 483v3h1v-3zM300 489v3h1v-3zM300 495v3h1v-3zM300 501v3h1v-3zM300 507v3h1v-3zM300 513v3h1v-3zM300 519v3h1v-3zM300 525v3h1v-3zM300 531v3h1v-3zM300 537v3h1v-3zM300 543v3h1v-3zM300 549v2h1v-2z" fill="#778899"/>
<path d="M332 34v2h1v-2zM332 39v3h1v-3zM332 45v3h1v-3zM332 51v3h1v-3zM332 57v3h1v-3zM332 63v3h1v-3zM332 69v3h1v-3zM332 75v3h1v-3zM332 81v3h1v-3zM332 87v3h1v-3zM332 93v3h1v-3zM332 99v3h1v-3zM332 105v3h1v-3zM332 111v3h1v-3zM332 117v3h1v-3zM332 123v3h1v-3zM332 129v3h1v-3zM332 135v3h1v-3zM332 141v3h1v-3zM332 147v3h1v-3zM332 153v3h1v-3zM332 159v3h1v-3zM332 165v3h1v-3zM332 171v3h1v-3zM332 177v3h1v-3zM332 183v3h1v-3zM332 189v3h1v-3zM332 195v3h1v-3zM332 201v3h1v-3zM332 207v3h1v-3zM332 213v3h1v-3zM332 219v3h1v-3zM332 225v3h1v-3zM332 231v3h1v-3zM332 237v3h1v-3zM332 243v3h1v-3zM332 249v3h1v-3zM332 255v3h1v-3zM332 261v3h1v-3zM332 267v3h1v-3zM332 273v3h1v-3zM332 279v3h1v-3zM332 285v3h1v-3zM332 291v3h1v-3zM332 297v3h1v-3zM332 303v3h1v-3zM332 309v3h1v-3zM332 315v3h1v-3zM332 321v3h1v-3zM332 327v3h1v-3zM332 333v3h1v-3zM332 339v3h1v-3zM332 345v3h1v-3zM332 351v3h1v-3zM332 357v3h1v-3zM332 363v3h1v-3zM332 369v3h1v-3zM332 375v1h1v-1z" fill="#778899"/>
<path d="M332 381v3h1v-3zM332 387v3h1v-3zM332 393v3h1v-3zM332 399v3h1v-3zM332 405v3h1v-3zM332 411v3h1v-3zM332 417v3h1v-3zM332 423v3h1v-3zM332 429v3h1v-3zM332 435v3h1v-3zM332 441v3h1v-3zM332 447v3h1v-3zM332 453v3h1v-3zM332 459v3h1v-3zM332 465v3h1v-3zM332 471v3h1v-3zM332 477v3h1v-3zM332 483v3h1v-3zM332 489v3h1v-3zM332 495v3h1v-3zM332 501v3h1v-3zM332 507v3h1v-3zM332 513v3h1v-3zM332 519v3h1v-3zM332 525v3h1v-3zM332 531v3h1v-3zM332 537v3h1v-3zM332 543v3h1v-3zM332 549v2h1v-2z" fill="#778899"/>
<path d="M364 34v2h1v-2zM364 39v3h1v-3zM364 45v3h1v-3zM364 51v3h1v-3zM364 57v3h1v-3zM364 63v3h1v-3zM364 69v3h1v-3zM364 75v3h1v-3zM364 81v3h1v-3zM364 87v3h1v-3zM364 93v3h1v-3zM364 99v3h1v-3zM364 105v3h1v-3zM364 111v3h1v-3zM364 117v3h1v-3zM364 123v3h1v-3zM364 129v3h1v-3zM364 135v3h1v-3zM364 141v3h1v-3zM364 147v3h1v-3zM364 153v3h1v-3zM364 159v3h1v-3zM364 165v3h1v-3zM364 171v3h1v-3zM364 177v3h1v-3zM364 183v3h1v-3zM364 189v3h1v-3zM364 195v3h1v-3zM364 201v3h1v-3zM364 207v3h1v-3zM364 213v3h1v-3zM364 219v3h1v-3zM364 225v3h1v-3zM364 231v3h1v-3zM364 237v3h1v-3zM364 243v3h1v-3zM364 249v3h1v-3zM364 255v3h1v-3zM364 261v3h1v-3zM364 267v3h1v-3zM364 273v3h1v-3zM364 279v3h1v-3zM364 285v3h1v-3zM364 291v3h1v-3zM364 297v3h1v-3zM364 303v3h1v-3zM364 309v3h1v-3zM364 315v3h1v-3zM364 321v3h1v-3zM364 327v3h1v-3zM364 333v3h1v-3zM364 339v3h1v-3zM364 345v3h1v-3zM364 351v3h1v-3zM364 357v3h1v-3zM364 363v3h1v-3zM364 369v3h1v-3zM364 375v1h1v-1z" fill="#778899"/>
<path d="M364 381v3h1v-3zM364 387v3h1v-3zM364 393v3h1v-3zM364 399v3h1v-3zM364 405v3h1v-3zM364 411v3h1v-3zM364 417v3h1v-3zM364 423v3h1v-3zM364 429v3h1v-3zM364 435v3h1v-3zM364 441v3h1v-3zM364 447v3h1v-3zM364 453v3h1v-3zM364 459v3h1v-3zM364 465v3h1v-3zM364 471v3h1v-3zM364 477v3h1v-3zM364 483v3h1v-3zM364 489v3h1v-3zM364 495v3h1v-3zM364 501v3h1v-3zM364 507v3h1v-3zM364 513v3h1v-3zM364 519v3h1v-3zM364 525v3h1v-3zM364 531v3h1v-3zM364 537v3h1v-3zM364 543v3h1v-3zM364 549v2h1v-2z" fill="#778899"/>
<path d="M396 34v2h1v-2zM396 39v3h1v-3zM396 45v3h1v-3zM396 51v3h1v-3zM396 57v3h1v-3zM396 63v3h1v-3zM396 69v3h1v-3zM396 75v3h1v-3zM396 81v3h1v-3zM396 87v3h1v-3zM396 93v3h1v-3zM396 99v3h1v-3zM396 105v3h1v-3zM396 111v3h1v-3zM396 117v3h1v-3zM396 123v3h1v-3zM396 129v3h1v-3zM396 135v3h1v-3zM396 141v3h1v-3zM396 147v3h1v-3zM396 153v3h1v-3zM396 159v3h1v-3zM396 165v3h1v-3zM396 171v3h1v-3zM396 177v3h1v-3zM396 183v3h1v-3zM396 189v3h1v-3zM396 195v3h1v-3zM396 201v3h1v-3zM396 207v3h1v-3zM396 213v3h1v-3zM396 219v3h1v-3zM396 225v3h1v-3zM396 231v3h1v-3zM396 237v3h1v-3zM396 243v3h1v-3zM396 249v3h1v-3zM396 255v3h1v-3zM396 261v3h1v-3zM396 267v3h1v-3zM396 273v3h1v-3zM396 279v3h1v-3zM396 285v3h1v-3zM396 291v3h1v-3zM396 297v3h1v-3zM396 303v3h1v-3zM396 309v3h1v-3zM396 315v3h1v-3zM396 321v3h1v-3zM396 327v3h1v-3zM396 333v3h1v-3zM396 339v3h1v-3zM396 345v3h1v-3zM396 351v3h1v-3zM396 357v3h1v-3zM396 363v3h1v-3zM396 369v3h1v-3zM396 375v1h1v-1z" fill="#778899"/>
<path d="M396 381v3h1v-3zM396 387v3h1v-3zM396 393v3h1v-3zM396 399v3h1v-3zM396 405v3h1v-3zM396 411v3h1v-3zM396 417v3h1v-3zM396 423v3h1v-3zM396 429v3h1v-3zM396 435v3h1v-3zM396 441v3h1v-3zM396 447v3h1v-3zM396 453v3h1v-3zM396 459v3h1v-3zM396 465v3h1v-3zM396 471v3h1v-3zM396 477v3h1v-3zM396 483v3h1v-3zM396 489v3h1v-3zM396 495v3h1v-3zM396 501v3h1v-3zM396 507v3h1v-3zM396 513v3h1v-3zM396 519v3h1v-3zM396 525v3h1v-3zM396 531v3h1v-3zM396 537v3h1v-3zM396 543v3h1v-3zM396 549v2h1v-2z" fill="#778899"/>
<path d="M428 34v2h1v-2zM428 39v3h1v-3zM428 45v3h1v-3zM428 51v3h1v-3zM428 57v3h1v-3zM428 63v3h1v-3zM428 69v3h1v-3zM428 75v3h1v-3zM428 81v3h1v-3zM428 87v3h1v-3zM428 93v3h1v-3zM428 99v3h1v-3zM428 105v3h1v-3zM428 111v3h1v-3zM428 117v3h1v-3zM428 123v3h1v-3zM428 129v3h1v-3zM428 135v3h1v-3zM428 141v3h1v-3zM428 147v3h1v-3zM428 153v3h1v-3zM428 159v3h1v-3zM428 165v3h1v-3zM428 171v3h1v-3zM428 177v3h1v-3zM428 183v3h1v-3zM428 189v3h1v-3zM428 195v3h1v-3zM428 201v3h1v-3zM428 207v3h1v-3zM428 213v3h1v-3zM428 219v3h1v-3zM428 225v3h1v-3zM428 231v3h1v-3zM428 237v3h1v-3zM428 243v3h1v-3zM428 249v3h1v-3zM428 255v3h1v-3zM428 261v3h1v-3zM428 267v3h1v-3zM428 273v3h1v-3zM428 279v3h1v-3zM428 285v3h1v-3zM428 291v3h1v-3zM428 297v3h1v-3zM428 303v3h1v-3zM428 309v3h1v-3zM428 315v3h1v-3zM428 321v3h1v-3zM428 327v3h1v-3zM428 333v3h1v-3zM428 339v3h1v-3zM428 345v3h1v-3zM428 351v3h1v-3zM428 357v3h1v-3zM428 363v3h1v-3zM428 369v3h1v-3zM428 375v1h1v-1z" fill="#778899"/>
<path d="M428 381v3h1v-3zM428 387v3h1v-3zM428 393v3h1v-3zM428 399v3h1v-3zM428 405v3h1v-3zM428 411v3h1v-3zM428 417v3h1v-3zM428 423v3h1v-3zM428 429v3h1v-3zM428 435v3h1v-3zM428 441v3h1v-3zM428 447v3h1v-3zM428 453v3h1v-3zM428 459v3h1v-3zM428 465v3h1v-3zM428 471v3h1v-3zM428 477v3h1v-3zM428 483v3h1v-3zM428 489v3h1v-3zM428 495v3h1v-3zM428 501v3h1v-3zM428 507v3h1v-3zM428 513v3h1v-3zM428 519v3h1v-3zM428 525v3h1v-3zM428 531v3h1v-3zM428 537v3h1v-3zM428 543v3h1v-3zM428 549v2h1v-2z" fill="#778899"/>
<path d="M460 34v2h1v-2zM460 39v3h1v-3zM460 45v3h1v-3zM460 51v3h1v-3zM460 57v3h1v-3zM460 63v3h1v-3zM460 69v3h1v-3zM460 75v3h1v-3zM460 81v3h1v-3zM460 87v3h1v-3zM460 93v3h1v-3zM460 99v3h1v-3zM460 105v3h1v-3zM460 111v3h1v-3zM460 117v3h1v-3zM460 123v3h1v-3zM460 129v3h1v-3zM460 135v3h1v-3zM460 141v3h1v-3zM460 147v3h1v-3zM460 153v3h1v-3zM460 159v3h1v-3zM460 165v3h1v-3zM460 171v3h1v-3zM460 177v3h1v-3zM460 183v3h1v-3zM460 189v3h1v-3zM460 195v3h1v-3zM460 201v3h1v-3zM460 207v3h1v-3zM460 213v3h1v-3zM460 219v3h1v-3zM460 225v3h1v-3zM460 231v3h1v-3zM460 237v3h1v-3zM460 243v3h1v-3zM460 249v3h1v-3zM460 255v3h1v-3zM460 261v3h1v-3zM460 267v3h1v-3zM460 273v3h1v-3zM460 279v3h1v-3zM460 285v3h1v-3zM460 291v3h1v-3zM460 297v3h1v-3zM460 303v3h1v-3zM460 309v3h1v-3zM460 315v3h1v-3zM460 321v3h1v-3zM460 327v3h1v-3zM460 333v3h1v-3zM460 339v3h1v-3zM460 345v3h1v-3zM460 351v3h1v-3zM460 357v3h1v-3zM460 363v3h1v-3zM460 369v3h1v-3zM460 375v1h1v-1z" fill="#778899"/>
<path d="M460 381v3h1v-3zM460 387v3h1v-3zM460 393v3h1v-3zM460 399v3h1v-3zM460 405v3h1v-3zM460 411v3h1v-3zM460 417v3h1v-3zM460 423v3h1v-3zM460 429v3h1v-3zM460 435v3h1v-3zM460 441v3h1v-3zM460 447v3h1v-3zM460 453v3h1v-3zM460 459v3h1v-3zM460 465v3h1v-3zM460 471v3h1v-3zM460 477v3h1v-3zM460 483v3h1v-3zM460 489v3h1v-3zM460 495v3h1v-3zM460 501v3h1v-3zM460 507v3h1v-3zM460 513v3h1v-3zM460 519v3h1v-3zM460 525v3h1v-3zM460 531v3h1v-3zM460 537v3h1v-3zM460 543v3h1v-3zM460 549v2h1v-2z" fill="#778899"/>
<path d="M492 34v2h1v-2zM492 39v3h1v-3zM492 45v3h1v-3zM492 51v3h1v-3zM492 57v3h1v-3zM492 63v3h1v-3zM492 69v3h1v-3zM492 75v3h1v-3zM492 81v3h1v-3zM492 87v3h1v-3zM492 93v3h1v-3zM492 99v3h1v-3zM492 105v3h1v-3zM492 111v3h1v-3zM492 117v3h1v-3zM492 123v3h1v-3zM492 129v3h1v-3zM492 135v3h1v-3zM492 141v3h1v-3zM492 147v3h1v-3zM492 153v3h1v-3zM492 159v3h1v-3zM492 165v3h1v-3zM492 171v3h1v-3zM492 177v3h1v-3zM492 183v3h1v-3zM492 189v3h1v-3zM492 195v3h1v-3zM492 201v3h1v-3zM492 207v3h1v-3zM492 213v3h1v-3zM492 219v3h1v-3zM492 225v3h1v-3zM492 231v3h1v-3zM492 237v3h1v-3zM492 243v3h1v-3zM492 249v3h1v-3zM492 255v3h1v-3zM492 261v3h1v-3zM492 267v3h1v-3zM492 273v3h1v-3zM492 279v3h1v-3zM492 285v3h1v-3zM492 291v3h1v-3zM492 297v3h1v-3zM492 303v3h1v-3zM492 309v3h1v-3zM492 315v3h1v-3zM492 321v3h1v-3zM492 327v3h1v-3zM492 333v3h1v-3zM492 339v3h1v-3zM492 345v3h1v-3zM492 351v3h1v-3zM492 357v3h1v-3zM492 363v3h1v-3zM492 369v3h1v-3zM492 375v1h1v-1z" fill="#778899"/>
<path d="M492 381v3h1v-3zM492 387v3h1v-3zM492 393v3h1v-3zM492 399v3h1v-3zM492 405v3h1v-3zM492 411v3h1v-3zM492 417v3h1v-3zM492 423v3h1v-3zM492 429v3h1v-3zM492 435v3h1v-3zM492 441v3h1v-3zM492 447v3h1v-3zM492 453v3h1v-3zM492 459v3h1v-3zM492 465v3h1v-3zM492 471v3h1v-3zM492 477v3h1v-3zM492 483v3h1v-3zM492 489v3h1v-3zM492 495v3h1v-3zM492 501v3h1v-3zM492 507v3h1v-3zM492 513v3h1v-3zM492 519v3h1v-3zM492 525v3h1v-3zM492 531v3h1v-3zM492 537v3h1v-3zM492 543v3h1v-3zM492 549v2h1v-2z" fill="#778899"/>
<path d="M524 34v2h1v-2zM524 39v3h1v-3zM524 45v3h1v-3zM524 51v3h1v-3zM524 57v3h1v-3zM524 63v3h1v-3zM524 69v3h1v-3zM524 75v3h1v-3zM524 81v3h1v-3zM524 87v3h1v-3zM524 93v3h1v-3zM524 99v3h1v-3zM524 105v3h1v-3zM524 111v3h1v-3zM524 117v3h1v-3zM524 123v3h1v-3zM524 129v3h1v-3zM524 135v3h1v-3zM524 141v3h1v-3zM524 147v3h1v-3zM524 153v3h1v-3zM524 159v3h1v-3zM524 165v3h1v-3zM524 171v3h1v-3zM524 177v3h1v-3zM524 183v3h1v-3zM524 189v3h1v-3zM524 195v3h1v-3zM524 201v3h1v-3zM524 207v3h1v-3zM524 213v3h1v-3zM524 219v3h1v-3zM524 225v3h1v-3zM524 231v3h1v-3zM524 237v3h1v-3zM524 243v3h1v-3zM524 249v3h1v-3zM524 255v3h1v-3zM524 261v3h1v-3zM524 267v3h1v-3zM524 273v3h1v-3zM524 279v3h1v-3zM524 285v3h1v-3zM524 291v3h1v-3zM524 297v3h1v-3zM524 303v3h1v-3zM524 309v3h1v-3zM524 315v3h1v-3zM524 321v3h1v-3zM524 327v3h1v-3zM524 333v3h1v-3zM524 339v3h1v-3zM524 345v3h1v-3zM524 351v3h1v-3zM524 357v3h1v-3zM524 363v3h1v-3zM524 369v3h1v-3zM524 375v1h1v-1z" fill="#778899"/>
<path d="M524 381v3h1v-3zM524 387v3h1v-3zM524 393v3h1v-3zM524 399v3h1v-3zM524 405v3h1v-3zM524 411v3h1v-3zM524 417v3h1v-3zM524 423v3h1v-3zM524 429v3h1v-3zM524 435v3h1v-3zM524 441v3h1v-3zM524 447v3h1v-3zM524 453v3h1v-3zM524 459v3h1v-3zM524 465v3h1v-3zM524 471v3h1v-3zM524 477v3h1v-3zM524 483v3h1v-3zM524 489v3h1v-3zM524 495v3h1v-3zM524 501v3h1v-3zM524 507v3h1v-3zM524 513v3h1v-3zM524 519v3h1v-3zM524 525v3h1v-3zM524 531v3h1v-3zM524 537v3h1v-3zM524 543v3h1v-3zM524 549v2h1v-2z" fill="#778899"/>
<path d="M556 34v2h1v-2zM556 39v3h1v-3zM556 45v3h1v-3zM556 51v3h1v-3zM556 57v3h1v-3zM556 63v3h1v-3zM556 69v3h1v-3zM556 75v3h1v-3zM556 81v3h1v-3zM556 87v3h1v-3zM556 93v3h1v-3zM556 99v3h1v-3zM556 105v3h1v-3zM556 111v3h1v-3zM556 117v3h1v-3zM556 123v3h1v-3zM556 129v3h1v-3zM556 135v3h1v-3zM556 141v3h1v-3zM556 147v3h1v-3zM556 153v3h1v-3zM556 159v3h1v-3zM556 165v3h1v-3zM556 171v3h1v-3zM556 177v3h1v-3zM556 183v3h1v-3zM556 189v3h1v-3zM556 195v3h1v-3zM556 201v3h1v-3zM556 207v3h1v-3zM556 213v3h1v-3zM556 219v3h1v-3zM556 225v3h1v-3zM556 231v3h1v-3zM556 237v3h1v-3zM556 243v3h1v-3zM556 249v3h1v-3zM556 255v3h1v-3zM556 261v3h1v-3zM556 267v3h1v-3zM556 273v3h1v-3zM556 279v3h1v-3zM556 285v3h1v-3zM556 291v3h1v-3zM556 297v3h1v-3zM556 303v3h1v-3zM556 309v3h1v-3zM556 315v3h1v-3zM556 321v3h1v-3zM556 327v3h1v-3zM556 333v3h1v-3zM556 339v3h1v-3zM556 345v3h1v-3zM556 351v3h1v-3zM556 357v3h1v-3zM556 363v3h1v-3zM556 369v3h1v-3zM556 375v1h1v-1z" fill="#778899"/>
<path d="M556 381v3h1v-3zM556 387v3h1v-3zM556 393v3h1v-3zM556 399v3h1v-3zM556 405v3h1v-3zM556 411v3h1v-3zM556 417v3h1v-3zM556 423v3h1v-3zM556 429v3h1v-3zM556 435v3h1v-3zM556 441v3h1v-3zM556 447v3h1v-3zM556 453v3h1v-3zM556 459v3h1v-3zM556 465v3h1v-3zM556 471v3h1v-3zM556 477v3h1v-3zM556 483v3h1v-3zM556 489v3h1v-3zM556 495v3h1v-3zM556 501v3h1v-3zM556 507v3h1v-3zM556 513v3h1v-3zM556 519v3h1v-3zM556 525v3h1v-3zM556 531v3h1v-3zM556 537v3h1v-3zM556 543v3h1v-3zM556 549v2h1v-2z" fill="#778899"/>
<path d="M588 34v2h1v-2zM588 39v3h1v-3zM588 45v3h1v-3zM588 51v3h1v-3zM588 57v3h1v-3zM588 63v3h1v-3zM588 69v3h1v-3zM588 75v3h1v-3zM588 81v3h1v-3zM588 87v3h1v-3zM588 93v3h1v-3zM588 99v3h1v-3zM588 105v3h1v-3zM588 111v3h1v-3zM588 117v3h1v-3zM588 123v3h1v-3zM588 129v3h1v-3zM588 135v3h1v-3zM588 141v3h1v-3zM588 147v3h1v-3zM588 153v3h1v-3zM588 159v3h1v-3zM588 165v3h1v-3zM588 171v3h1v-3zM588 177v3h1v-3zM588 183v3h1v-3zM588 189v3h1v-3zM588 195v3h1v-3zM588 201v3h1v-3zM588 207v3h1v-3zM588 213v3h1v-3zM588 219v3h1v-3zM588 225v3h1v-3zM588 231v3h1v-3zM588 237v3h1v-3zM588 243v3h1v-3zM588 249v3h1v-3zM588 255v3h1v-3zM588 261v3h1v-3zM588 267v3h1v-3zM588 273v3h1v-3zM588 279v3h1v-3zM588 285v3h1v-3zM588 291v3h1v-3zM588 297v3h1v-3zM588 303v3h1v-3zM588 309v3h1v-3zM588 315v3h1v-3zM588 321v3h1v-3zM588 327v3h1v-3zM588 333v3h1v-3zM588 339v3h1v-3zM588 345v3h1v-3zM588 351v3h1v-3zM588 357v3h1v-3zM588 363v3h1v-3zM588 369v3h1v-3zM588 375v1h1v-1z" fill="#778899"/>
<path d="M588 381v3h1v-3zM588 387v3h1v-3zM588 393v3h1v-3zM588 399v3h1v-3zM588 405v3h1v-3zM588 411v3h1v-3zM588 417v3h1v-3zM588 423v3h1v-3zM588 429v3h1v-3zM588 435v3h1v-3zM588 441v3h1v-3zM588 447v3h1v-3zM588 453v3h1v-3zM588 459v3h1v-3zM588 465v3h1v-3zM588 471v3h1v-3zM588 477v3h1v-3zM588 483v3h1v-3zM588 489v3h1v-3zM588 495v3h1v-3zM588 501v3h1v-3zM588 507v3h1v-3zM588 513v3h1v-3zM588 519v3h1v-3zM588 525v3h1v-3zM588 531v3h1v-3zM588 537v3h1v-3zM588 543v3h1v-3zM588 549v2h1v-2z" fill="#778899"/>
<path d="M620 34v2h1v-2zM620 39v3h1v-3zM620 45v3h1v-3zM620 51v3h1v-3zM620 57v3h1v-3zM620 63v3h1v-3zM620 69v3h1v-3zM620 75v3h1v-3zM620 81v3h1v-3zM620 87v3h1v-3zM620 93v3h1v-3zM620 99v3h1v-3zM620 105v3h1v-3zM620 111v3h1v-3zM620 117v3h1v-3zM620 123v3h1v-3zM620 129v3h1v-3zM620 135v3h1v-3zM620 141v3h1v-3zM620 147v3h1v-3zM620 153v3h1v-3zM620 159v3h1v-3zM620 165v3h1v-3zM620 171v3h1v-3zM620 177v3h1v-3zM620 183v3h1v-3zM620 189v3h1v-3zM620 195v3h1v-3zM620 201v3h1v-3zM620 207v3h1v-3zM620 213v3h1v-3zM620 219v3h1v-3zM620 225v3h1v-3zM620 231v3h1v-3zM620 237v3h1v-3zM620 243v3h1v-3zM620 249v3h1v-3zM620 255v3h1v-3zM620 261v3h1v-3zM620 267v3h1v-3zM620 273v3h1v-3zM620 279v3h1v-3zM620 285v3h1v-3zM620 291v3h1v-3zM620 297v3h1v-3zM620 303v3h1v-3zM620 309v3h1v-3zM620 315v3h1v-3zM620 321v3h1v-3zM620 327v3h1v-3zM620 333v3h1v-3zM620 339v3h1v-3zM620 345v3h1v-3zM620 351v3h1v-3zM620 357v3h1v-3zM620 363v3h1v-3zM620 369v3h1v-3zM620 375v1h1v-1z" fill="#778899"/>
<path d="M620 381v3h1v-3zM620 387v3h1v-3zM620 393v3h1v-3zM620 399v3h1v-3zM620 405v3h1v-3zM620 411v3h1v-3zM620 417v3h1v-3zM620 423v3h1v-3zM620 429v3h1v-3zM620 435v3h1v-3zM620 441v3h1v-3zM620 447v3h1v-3zM620 453v3h1v-3zM620 459v3h1v-3zM620 465v3h1v-3zM620 471v3h1v-3zM620 477v3h1v-3zM620 483v3h1v-3zM620 489v3h1v-3zM620 495v3h1v-3zM620 501v3h1v-3zM620 507v3h1v-3zM620 513v3h1v-3zM620 519v3h1v-3zM620 525v3h1v-3zM620 531v3h1v-3zM620 537v3h1v-3zM620 543v3h1v-3zM620 549v2h1v-2z" fill="#778899"/>
<path d="M652 34v2h1v-2zM652 39v3h1v-3zM652 45v3h1v-3zM652 51v3h1v-3zM652 57v3h1v-3zM652 63v3h1v-3zM652 69v3h1v-3zM652 75v3h1v-3zM652 81v3h1v-3zM652 87v3h1v-3zM652 93v3h1v-3zM652 99v3h1v-3zM652 105v3h1v-3zM652 111v3h1v-3zM652 117v3h1v-3zM652 123v3h1v-3zM652 129v3h1v-3zM652 135v3h1v-3zM652 141v3h1v-3zM652 147v3h1v-3zM652 153v3h1v-3zM652 159v3h1v-3zM652 165v3h1v-3zM652 171v3h1v-3zM652 177v3h1v-3zM652 183v3h1v-3zM652 189v3h1v-3zM652 195v3h1v-3zM652 201v3h1v-3zM652 207v3h1v-3zM652 213v3h1v-3zM652 219v3h1v-3zM652 225v3h1v-3zM652 231v3h1v-3zM652 237v3h1v-3zM652 243v3h1v-3zM652 249v3h1v-3zM652 255v3h1v-3zM652 261v3h1v-3zM652 267v3h1v-3zM652 273v3h1v-3zM652 279v3h1v-3zM652 285v3h1v-3zM652 291v3h1v-3zM652 297v3h1v-3zM652 303v3h1v-3zM652 309v3h1v-3zM652 315v3h1v-3zM652 321v3h1v-3zM652 327v3h1v-3zM652 333v3h1v-3zM652 339v3h1v-3zM652 345v3h1v-3zM652 351v3h1v-3zM652 357v3h1v-3zM652 363v3h1v-3zM652 369v3h1v-3zM652 375v1h1v-1z" fill="#778899"/>
<path d="M652 381v3h1v-3zM652 387v3h1v-3zM652 393v3h1v-3zM652 399v3h1v-3zM652 405v3h1v-3zM652 411v3h1v-3zM652 417v3h1v-3zM652 423v3h1v-3zM652 429v3h1v-3zM652 435v3h1v-3zM652 441v3h1v-3zM652 447v3h1v-3zM652 453v3h1v-3zM652 459v3h1v-3zM652 465v3h1v-3zM652 471v3h1v-3zM652 477v3h1v-3zM652 483v3h1v-3zM652 489v3h1v-3zM652 495v3h1v-3zM652 501v3h1v-3zM652 507v3h1v-3zM652 513v3h1v-3zM652 519v3h1v-3zM652 525v3h1v-3zM652 531v3h1v-3zM652 537v3h1v-3zM652 543v3h1v-3zM652 549v2h1v-2z" fill="#778899"/>
<path d="M13 395h3v1h-3zM19 395h3v1h-3zM25 395h3v1h-3zM31 395h3v1h-3zM37 395h3v1h-3zM43 395h3v1h-3zM49 395h3v1h-3zM55 395h3v1h-3zM61 395h3v1h-3zM67 395h3v1h-3zM73 395h3v1h-3zM79 395h3v1h-3zM85 395h3v1h-3zM91 395h3v1h-3zM97 395h3v1h-3zM103 395h3v1h-3zM109 395h3v1h-3zM115 395h3v1h-3zM121 395h3v1h-3zM127 395h3v1h-3zM133 395h3v1h-3zM139 395h3v1h-3zM145 395h3v1h-3zM151 395h3v1h-3zM157 395h3v1h-3zM163 395h3v1h-3zM169 395h3v1h-3zM175 395h3v1h-3zM181 395h3v1h-3zM187 395h3v1h-3zM193 395h3v1h-3zM199 395h3v1h-3zM205 395h3v1h-3zM211 395h3v1h-3zM217 395h3v1h-3zM223 395h3v1h-3zM229 395h3v1h-3zM235 395h3v1h-3zM241 395h3v1h-3zM247 395h3v1h-3zM253 395h3v1h-3zM259 395h3v1h-3zM265 395h3v1h-3zM271 395h3v1h-3zM277 395h3v1h-3zM283 395h3v1h-3zM289 395h3v1h-3zM295 395h3v1h-3zM301 395h3v1h-3zM307 395h3v1h-3zM313 395h3v1h-3zM319 395h3v1h-3zM325 395h3v1h-3zM331 395h3v1h-3zM337 395h3v1h-3zM343 395h3v1h-3zM349 395h3v1h-3zM355 395h3v1h-3zM361 395h3v1h-3zM367 395h3v1h-3zM373 395h3v1h-3zM379 395h3v1h-3zM385 395h3v1h-3zM391 395h3v1h-3zM397 395h3v1h-3zM403 395h3v1h-3zM409 395h3v1h-3zM415 395h3v1h-3zM421 395h3v1h-3zM427 395h3v1h-3zM433 395h3v1h-3zM439 395h3v1h-3zM445 395h3v1h-3zM451 395h3v1h-3zM457 395h3v1h-3zM463 395h3v1h-3zM469 395h3v1h-3zM475 395h3v1h-3zM481 395h3v1h-3zM487 395h3v1h-3zM493 395h3v1h-3zM499 395h3v1h-3zM505 395h3v1h-3zM511 395h3v1h-3zM517 395h3v1h-3zM523 395h3v1h-3zM529 395h3v1h-3zM535 395h3v1h-3zM541 395h3v1h-3zM547 395h3v1h-3zM553 395h3v1h-3zM559 395h3v1h-3zM565 395h3v1h-3zM571 395h3v1h-3zM577 395h3v1h-3zM583 395h3v1h-3zM589 395h3v1h-3zM595 395h3v1h-3zM601 395h3v1h-3zM607 395h3v1h-3zM613 395h3v1h-3zM619 395h3v1h-3zM625 395h3v1h-3zM631 395h3v1h-3zM637 395h3v1h-3zM643 395h3v1h-3zM649 395h3v1h-3zM655 395h3v1h-3zM661 395h3v1h-3zM667 395h3v1h-3zM673 395h3v1h-3z" fill="#c0c0c0"/>
<path d="M13 411h3v1h-3zM19 411h3v1h-3zM25 411h3v1h-3zM31 411h3v1h-3zM37 411h3v1h-3zM43 411h3v1h-3zM49 411h3v1h-3zM55 411h3v1h-3zM61 411h3v1h-3zM67 411h3v1h-3zM73 411h3v1h-3zM79 411h3v1h-3zM85 411h3v1h-3zM91 411h3v1h-3zM97 411h3v1h-3zM103 411h3v1h-3zM109 411h3v1h-3zM115 411h3v1h-3zM121 411h3v1h-3zM127 411h3v1h-3zM133 411h3v1h-3zM139 411h3v1h-3zM145 411h3v1h-3zM151 411h3v1h-3zM157 411h3v1h-3zM163 411h3v1h-3zM169 411h3v1h-3zM175 411h3v1h-3zM181 411h3v1h-3zM187 411h3v1h-3zM193 411h3v1h-3zM199 411h3v1h-3zM205 411h3v1h-3zM211 411h3v1h-3zM217 411h3v1h-3zM223 411h3v1h-3zM229 411h3v1h-3zM235 411h3v1h-3zM241 411h3v1h-3zM247 411h3v1h-3zM253 411h3v1h-3zM259 411h3v1h-3zM265 411h3v1h-3zM271 411h3v1h-3zM277 411h3v1h-3zM283 411h3v1h-3zM289 411h3v1h-3zM295 411h3v1h-3zM301 411h3v1h-3zM307 411h3v1h-3zM313 411h3v1h-3zM319 411h3v1h-3zM325 411h3v1h-3zM331 411h3v1h-3zM337 411h3v1h-3zM343 411h3v1h-3zM349 411h3v1h-3zM355 411h3v1h-3zM361 411h3v1h-3zM367 411h3v1h-3zM373 411h3v1h-3zM379 411h3v1h-3zM385 411h3v1h-3zM391 411h3v1h-3zM397 411h3v1h-3zM403 411h3v1h-3zM409 411h3v1h-3zM415 411h3v1h-3zM421 411h3v1h-3zM427 411h3v1h-3zM433 411h3v1h-3zM439 411h3v1h-3zM445 411h3v1h-3zM451 411h3v1h-3zM457 411h3v1h-3zM463 411h3v1h-3zM469 411h3v1h-3zM475 411h3v1h-3zM481 411h3v1h-3zM487 411h3v1h-3zM493 411h3v1h-3zM499 411h3v1h-3zM505 411h3v1h-3zM511 411h3v1h-3zM517 411h3v1h-3zM523 411h3v1h-3zM529 411h3v1h-3zM535 411h3v1h-3zM541 411h3v1h-3zM547 411h3v1h-3zM553 411h3v1h-3zM559 411h3v1h-3zM565 411h3v1h-3zM571 411h3v1h-3zM577 411h3v1h-3zM583 411h3v1h-3zM589 411h3v1h-3zM595 411h3v1h-3zM601 411h3v1h-3zM607 411h3v1h-3zM613 411h3v1h-3zM619 411h3v1h-3zM625 411h3v1h-3zM631 411h3v1h-3zM637 411h3v1h-3zM643 411h3v1h-3zM649 411h3v1h-3zM655 411h3v1h-3zM661 411h3v1h-3zM667 411h3v1h-3zM673 411h3v1h-3z" fill="#c0c0c0"/>
<path d="M13 434h3v1h-3zM19 434h3v1h-3zM25 434h3v1h-3zM31 434h3v1h-3zM37 434h3v1h-3zM43 434h3v1h-3zM49 434h3v1h-3zM55 434h3v1h-3zM61 434h3v1h-3zM67 434h3v1h-3zM73 434h3v1h-3zM79 434h3v1h-3zM85 434h3v1h-3zM91 434h3v1h-3zM97 434h3v1h-3zM103 434h3v1h-3zM109 434h3v1h-3zM115 434h3v1h-3zM121 434h3v1h-3zM127 434h3v1h-3zM133 434h3v1h-3zM139 434h3v1h-3zM145 434h3v1h-3zM151 434h3v1h-3zM157 434h3v1h-3zM163 434h3v1h-3zM169 434h3v1h-3zM175 434h3v1h-3zM181 434h3v1h-3zM187 434h3v1h-3zM193 434h3v1h-3zM199 434h3v1h-3zM205 434h3v1h-3zM211 434h3v1h-3zM217 434h3v1h-3zM223 434h3v1h-3zM229 434h3v1h-3zM235 434h3v1h-3zM241 434h3v1h-3zM247 434h3v1h-3zM253 434h3v1h-3zM259 434h3v1h-3zM265 434h3v1h-3zM271 434h3v1h-3zM277 434h3v1h-3zM283 434h3v1h-3zM289 434h3v1h-3zM295 434h3v1h-3zM301 434h3v1h-3zM307 434h3v1h-3zM313 434h3v1h-3zM319 434h3v1h-3zM325 434h3v1h-3zM331 434h3v1h-3zM337 434h3v1h-3zM343 434h3v1h-3zM349 434h3v1h-3zM355 434h3v1h-3zM361 434h3v1h-3zM367 434h3v1h-3zM373 434h3v1h-3zM379 434h3v1h-3zM385 434h3v1h-3zM391 434h3v1h-3zM397 434h3v1h-3zM403 434h3v1h-3zM409 434h3v1h-3zM415 434h3v1h-3zM421 434h3v1h-3zM427 434h3v1h-3zM433 434h3v1h-3zM439 434h3v1h-3zM445 434h3v1h-3zM451 434h3v1h-3zM457 434h3v1h-3zM463 434h3v1h-3zM469 434h3v1h-3zM475 434h3v1h-3zM481 434h3v1h-3zM487 434h3v1h-3zM493 434h3v1h-3zM499 434h3v1h-3zM505 434h3v1h-3zM511 434h3v1h-3zM517 434h3v1h-3zM523 434h3v1h-3zM529 434h3v1h-3zM535 434h3v1h-3zM541 434h3v1h-3zM547 434h3v1h-3zM553 434h3v1h-3zM559 434h3v1h-3zM565 434h3v1h-3zM571 434h3v1h-3zM577 434h3v1h-3zM583 434h3v1h-3zM589 434h3v1h-3zM595 434h3v1h-3zM601 434h3v1h-3zM607 434h3v1h-3zM613 434h3v1h-3zM619 434h3v1h-3zM625 434h3v1h-3zM631 434h3v1h-3zM637 434h3v1h-3zM643 434h3v1h-3zM649 434h3v1h-3zM655 434h3v1h-3zM661 434h3v1h-3zM667 434h3v1h-3zM673 434h3v1h-3z" fill="#c0c0c0"/>
<path d="M13 473h3v1h-3zM19 473h3v1h-3zM25 473h3v1h-3zM31 473h3v1h-3zM37 473h3v1h-3zM43 473h3v1h-3zM49 473h3v1h-3zM55 473h3v1h-3zM61 473h3v1h-3zM67 473h3v1h-3zM73 473h3v1h-3zM79 473h3v1h-3zM85 473h3v1h-3zM91 473h3v1h-3zM97 473h3v1h-3zM103 473h3v1h-3zM109 473h3v1h-3zM115 473h3v1h-3zM121 473h3v1h-3zM127 473h3v1h-3zM133 473h3v1h-3zM139 473h3v1h-3zM145 473h3v1h-3zM151 473h3v1h-3zM157 473h3v1h-3zM163 473h3v1h-3zM169 473h3v1h-3zM175 473h3v1h-3zM181 473h3v1h-3zM187 473h3v1h-3zM193 473h3v1h-3zM199 473h3v1h-3zM205 473h3v1h-3zM211 473h3v1h-3zM217 473h3v1h-3zM223 473h3v1h-3zM229 473h3v1h-3zM235 473h3v1h-3zM241 473h3v1h-3zM247 473h3v1h-3zM253 473h3v1h-3zM259 473h3v1h-3zM265 473h3v1h-3zM271 473h3v1h-3zM277 473h3v1h-3zM283 473h3v1h-3zM289 473h3v1h-3zM295 473h3v1h-3zM301 473h3v1h-3zM307 473h3v1h-3zM313 473h3v1h-3zM319 473h3v1h-3zM325 473h3v1h-3zM331 473h3v1h-3zM337 473h3v1h-3zM343 473h3v1h-3zM349 473h3v1h-3zM355 473h3v1h-3zM361 473h3v1h-3zM367 473h3v1h-3zM373 473h3v1h-3zM379 473h3v1h-3zM385 473h3v1h-3zM391 473h3v1h-3zM397 473h3v1h-3zM403 473h3v1h-3zM409 473h3v1h-3zM415 473h3v1h-3zM421 473h3v1h-3zM427 473h3v1h-3zM433 473h3v1h-3zM439 473h3v1h-3zM445 473h3v1h-3zM451 473h3v1h-3zM457 473h3v1h-3zM463 473h3v1h-3zM469 473h3v1h-3zM475 473h3v1h-3zM481 473h3v1h-3zM487 473h3v1h-3zM493 473h3v1h-3zM499 473h3v1h-3zM505 473h3v1h-3zM511 473h3v1h-3zM517 473h3v1h-3zM523 473h3v1h-3zM529 473h3v1h-3zM535 473h3v1h-3zM541 473h3v1h-3zM547 473h3v1h-3zM553 473h3v1h-3zM559 473h3v1h-3zM565 473h3v1h-3zM571 473h3v1h-3zM577 473h3v1h-3zM583 473h3v1h-3zM589 473h3v1h-3zM595 473h3v1h-3zM601 473h3v1h-3zM607 473h3v1h-3zM613 473h3v1h-3zM619 473h3v1h-3zM625 473h3v1h-3zM631 473h3v1h-3zM637 473h3v1h-3zM643 473h3v1h-3zM649 473h3v1h-3zM655 473h3v1h-3zM661 473h3v1h-3zM667 473h3v1h-3zM673 473h3v1h-3z" fill="#c0c0c0"/>
<path d="M13 512h3v1h-3zM19 512h3v1h-3zM25 512h3v1h-3zM31 512h3v1h-3zM37 512h3v1h-3zM43 512h3v1h-3zM49 512h3v1h-3zM55 512h3v1h-3zM61 512h3v1h-3zM67 512h3v1h-3zM73 512h3v1h-3zM79 512h3v1h-3zM85 512h3v1h-3zM91 512h3v1h-3zM97 512h3v1h-3zM103 512h3v1h-3zM109 512h3v1h-3zM115 512h3v1h-3zM121 512h3v1h-3zM127 512h3v1h-3zM133 512h3v1h-3zM139 512h3v1h-3zM145 512h3v1h-3zM151 512h3v1h-3zM157 512h3v1h-3zM163 512h3v1h-3zM169 512h3v1h-3zM175 512h3v1h-3zM181 512h3v1h-3zM187 512h3v1h-3zM193 512h3v1h-3zM199 512h3v1h-3zM205 512h3v1h-3zM211 512h3v1h-3zM217 512h3v1h-3zM223 512h3v1h-3zM229 512h3v1h-3zM235 512h3v1h-3zM241 512h3v1h-3zM247 512h3v1h-3zM253 512h3v1h-3zM259 512h3v1h-3zM265 512h3v1h-3zM271 512h3v1h-3zM277 512h3v1h-3zM283 512h3v1h-3zM289 512h3v1h-3zM295 512h3v1h-3zM301 512h3v1h-3zM307 512h3v1h-3zM313 512h3v1h-3zM319 512h3v1h-3zM325 512h3v1h-3zM331 512h3v1h-3zM337 512h3v1h-3zM343 512h3v1h-3zM349 512h3v1h-3zM355 512h3v1h-3zM361 512h3v1h-3zM367 512h3v1h-3zM373 512h3v1h-3zM379 512h3v1h-3zM385 512h3v1h-3zM391 512h3v1h-3zM397 512h3v1h-3zM403 512h3v1h-3zM409 512h3v1h-3zM415 512h3v1h-3zM421 512h3v1h-3zM427 512h3v1h-3zM433 512h3v1h-3zM439 512h3v1h-3zM445 512h3v1h-3zM451 512h3v1h-3zM457 512h3v1h-3zM463 512h3v1h-3zM469 512h3v1h-3zM475 512h3v1h-3zM481 512h3v1h-3zM487 512h3v1h-3zM493 512h3v1h-3zM499 512h3v1h-3zM505 512h3v1h-3zM511 512h3v1h-3zM517 512h3v1h-3zM523 512h3v1h-3zM529 512h3v1h-3zM535 512h3v1h-3zM541 512h3v1h-3zM547 512h3v1h-3zM553 512h3v1h-3zM559 512h3v1h-3zM565 512h3v1h-3zM571 512h3v1h-3zM577 512h3v1h-3zM583 512h3v1h-3zM589 512h3v1h-3zM595 512h3v1h-3zM601 512h3v1h-3zM607 512h3v1h-3zM613 512h3v1h-3zM619 512h3v1h-3zM625 512h3v1h-3zM631 512h3v1h-3zM637 512h3v1h-3zM643 512h3v1h-3zM649 512h3v1h-3zM655 512h3v1h-3zM661 512h3v1h-3zM667 512h3v1h-3zM673 512h3v1h-3z" fill="#c0c0c0"/>
<path d="M13 535h3v1h-3zM19 535h3v1h-3zM25 535h3v1h-3zM31 535h3v1h-3zM37 535h3v1h-3zM43 535h3v1h-3zM49 535h3v1h-3zM55 535h3v1h-3zM61 535h3v1h-3zM67 535h3v1h-3zM73 535h3v1h-3zM79 535h3v1h-3zM85 535h3v1h-3zM91 535h3v1h-3zM97 535h3v1h-3zM103 535h3v1h-3zM109 535h3v1h-3zM115 535h3v1h-3zM121 535h3v1h-3zM127 535h3v1h-3zM133 535h3v1h-3zM139 535h3v1h-3zM145 535h3v1h-3zM151 535h3v1h-3zM157 535h3v1h-3zM163 535h3v1h-3zM169 535h3v1h-3zM175 535h3v1h-3zM181 535h3v1h-3zM187 535h3v1h-3zM193 535h3v1h-3zM199 535h3v1h-3zM205 535h3v1h-3zM211 535h3v1h-3zM217 535h3v1h-3zM223 535h3v1h-3zM229 535h3v1h-3zM235 535h3v1h-3zM241 535h3v1h-3zM247 535h3v1h-3zM253 535h3v1h-3zM259 535h3v1h-3zM265 535h3v1h-3zM271 535h3v1h-3zM277 535h3v1h-3zM283 535h3v1h-3zM289 535h3v1h-3zM295 535h3v1h-3zM301 535h3v1h-3zM307 535h3v1h-3zM313 535h3v1h-3zM319 535h3v1h-3zM325 535h3v1h-3zM331 535h3v1h-3zM337 535h3v1h-3zM343 535h3v1h-3zM349 535h3v1h-3zM355 535h3v1h-3zM361 535h3v1h-3zM367 535h3v1h-3zM373 535h3v1h-3zM379 535h3v1h-3zM385 535h3v1h-3zM391 535h3v1h-3zM397 535h3v1h-3zM403 535h3v1h-3zM409 535h3v1h-3zM415 535h3v1h-3zM421 535h3v1h-3zM427 535h3v1h-3zM433 535h3v1h-3zM439 535h3v1h-3zM445 535h3v1h-3zM451 535h3v1h-3zM457 535h3v1h-3zM463 535h3v1h-3zM469 535h3v1h-3zM475 535h3v1h-3zM481 535h3v1h-3zM487 535h3v1h-3zM493 535h3v1h-3zM499 535h3v1h-3zM505 535h3v1h-3zM511 535h3v1h-3zM517 535h3v1h-3zM523 535h3v1h-3zM529 535h3v1h-3zM535 535h3v1h-3zM541 535h3v1h-3zM547 535h3v1h-3zM553 535h3v1h-3zM559 535h3v1h-3zM565 535h3v1h-3zM571 535h3v1h-3zM577 535h3v1h-3zM583 535h3v1h-3zM589 535h3v1h-3zM595 535h3v1h-3zM601 535h3v1h-3zM607 535h3v1h-3zM613 535h3v1h-3zM619 535h3v1h-3zM625 535h3v1h-3zM631 535h3v1h-3zM637 535h3v1h-3zM643 535h3v1h-3zM649 535h3v1h-3zM655 535h3v1h-3zM661 535h3v1h-3zM667 535h3v1h-3zM673 535h3v1h-3z" fill="#c0c0c0"/>
<rect x="11" y="33" width="669" height="1" fill="#ffffff"/>
<rect x="11" y="376" width="669" height="1" fill="#ffffff"/>
<rect x="11" y="33" width="1" height="344" fill="#ffffff"/>
<rect x="679" y="33" width="1" height="344" fill="#ffffff"/>
<rect x="11" y="378" width="669" height="1" fill="#ffffff"/>
<rect x="11" y="551" width="669" height="1" fill="#ffffff"/>
<rect x="11" y="378" width="1" height="174" fill="#ffffff"/>
<rect x="679" y="378" width="1" height="174" fill="#ffffff"/>
<rect x="680" y="58" width="2" height="1" fill="#ffffff"/>
<rect x="680" y="93" width="2" height="1" fill="#ffffff"/>
<rect x="680" y="128" width="2" height="1" fill="#ffffff"/>
<rect x="680" y="162" width="2" height="1" fill="#ffffff"/>
<rect x="680" y="197" width="2" height="1" fill="#ffffff"/>
<rect x="680" y="232" width="2" height="1" fill="#ffffff"/>
<rect x="680" y="267" width="2" height="1" fill="#ffffff"/>
<rect x="680" y="302" width="2" height="1" fill="#ffffff"/>
<rect x="680" y="337" width="2" height="1" fill="#ffffff"/>
<rect x="680" y="372" width="2" height="1" fill="#ffffff"/>
<rect x="680" y="380" width="1" height="1" fill="#ffffff"/>
<rect x="680" y="550" width="1" height="1" fill="#ffffff"/>
<rect x="12" y="552" width="1" height="3" fill="#ffffff"/>
<rect x="76" y="552" width="1" height="3" fill="#ffffff"/>
<rect x="140" y="552" width="1" height="3" fill="#ffffff"/>
<rect x="204" y="552" width="1" height="3" fill="#ffffff"/>
<rect x="268" y="552" width="1" height="3" fill="#ffffff"/>
<rect x="332" y="552" width="1" height="3" fill="#ffffff"/>
<rect x="396" y="552" width="1" height="3" fill="#ffffff"/>
<rect x="460" y="552" width="1" height="3" fill="#ffffff"/>
<rect x="524" y="552" width="1" height="3" fill="#ffffff"/>
<rect x="588" y="552" width="1" height="3" fill="#ffffff"/>
<rect x="652" y="552" width="1" height="3" fill="#ffffff"/>
<path d="M12 137h1v12h-1zM10 141h5v8h-5zM20 138h1v4h-1zM18 141h5v1h-5zM28 101h1v43h-1zM26 103h5v41h-5zM36 72h1v31h-1zM34 84h5v19h-5zM44 78h1v16h-1zM42 84h5v3h-5zM52 69h1v15h-1zM50 69h5v15h-5zM60 56h1v29h-1zM58 70h5v13h-5zM68 65h1v17h-1zM66 68h5v14h-5zM76 66h1v14h-1zM74 67h5v8h-5zM84 69h1v16h-1zM82 73h5v5h-5zM92 68h1v23h-1zM90 77h5v11h-5zM100 90h1v18h-1zM98 90h5v5h-5zM108 88h1v26h-1zM106 95h5v13h-5zM116 99h1v12h-1zM114 103h5v6h-5zM124 93h1v20h-1zM122 103h5v8h-5zM132 109h1v13h-1zM130 109h5v5h-5zM140 94h1v19h-1zM138 104h5v9h-5zM148 96h1v16h-1zM146 103h5v2h-5zM156 96h1v8h-1zM154 100h5v4h-5zM164 97h1v7h-1zM162 99h5v2h-5zM172 97h1v7h-1zM170 99h5v2h-5zM180 100h1v16h-1zM178 100h5v16h-5zM188 112h1v10h-1zM186 115h5v6h-5zM196 114h1v15h-1zM194 114h5v8h-5zM204 110h1v19h-1zM202 113h5v16h-5zM212 121h1v10h-1zM210 128h5v2h-5zM220 121h1v18h-1zM218 127h5v11h-5zM228 129h1v17h-1zM226 135h5v9h-5zM236 137h1v9h-1zM234 138h5v5h-5zM244 134h1v10h-1zM242 139h5v5h-5zM252 144h1v12h-1zM250 144h5v12h-5zM260 152h1v5h-1zM258 155h5v2h-5zM268 156h1v4h-1zM266 156h5v4h-5zM276 155h1v6h-1zM274 157h5v4h-5zM284 152h1v15h-1zM282 158h5v9h-5zM292 166h1v13h-1zM290 168h5v9h-5zM300 171h1v9h-1zM298 174h5v6h-5zM308 173h1v8h-1zM306 173h5v6h-5zM316 171h1v7h-1zM314 172h5v3h-5zM324 173h1v9h-1zM322 173h5v5h-5zM332 176h1v8h-1zM330 179h5v4h-5zM340 180h1v22h-1zM338 183h5v17h-5zM348 193h1v8h-1zM346 197h5v4h-5zM356 198h1v10h-1zM354 200h5v6h-5zM364 201h1v17h-1zM362 207h5v9h-5zM372 207h1v10h-1zM370 214h5v3h-5zM380 217h1v8h-1zM378 217h5v3h-5zM388 218h1v14h-1zM386 218h5v14h-5zM396 231h1v18h-1zM394 232h5v17h-5zM404 245h1v22h-1zM402 247h5v20h-5zM412 262h1v16h-1zM410 265h5v13h-5zM420 273h1v15h-1zM418 276h5v4h-5zM428 259h1v22h-1zM426 267h5v11h-5zM436 269h1v33h-1zM434 269h5v21h-5zM444 281h1v22h-1zM442 288h5v13h-5zM452 298h1v8h-1zM450 301h5v3h-5zM460 291h1v19h-1zM458 300h5v3h-5zM468 291h1v13h-1zM466 295h5v7h-5zM476 296h1v20h-1zM474 296h5v17h-5zM484 299h1v14h-1zM482 305h5v7h-5zM492 303h1v4h-1zM490 304h5v1h-5zM500 305h1v27h-1zM498 305h5v27h-5zM508 331h1v17h-1zM506 332h5v10h-5zM516 336h1v16h-1zM514 338h5v3h-5zM524 329h1v20h-1zM522 338h5v4h-5zM532 341h1v16h-1zM530 341h5v11h-5zM540 353h1v12h-1zM538 353h5v2h-5zM548 344h1v17h-1zM546 344h5v12h-5zM556 338h1v12h-1zM554 338h5v7h-5zM564 331h1v6h-1zM562 335h5v2h-5zM572 335h1v10h-1zM570 336h5v3h-5zM580 339h1v10h-1zM578 339h5v4h-5zM588 338h1v9h-1zM586 338h5v6h-5zM596 339h1v15h-1zM594 339h5v6h-5zM604 337h1v8h-1zM602 338h5v6h-5zM612 329h1v12h-1zM610 329h5v11h-5zM620 317h1v16h-1zM618 317h5v15h-5zM628 318h1v16h-1zM626 318h5v2h-5zM636 317h1v9h-1zM634 317h5v8h-5zM644 313h1v13h-1zM642 324h5v2h-5zM652 320h1v10h-1zM650 320h5v6h-5zM660 320h1v15h-1zM658 320h5v13h-5z" fill="#00ff00"/>
<path d="M11 142h3v6h-3zM27 104h3v39h-3zM35 85h3v17h-3zM43 85h3v1h-3zM51 70h3v13h-3zM67 69h3v12h-3zM115 104h3v4h-3zM139 105h3v7h-3zM155 101h3v2h-3zM195 115h3v6h-3zM235 139h3v3h-3zM275 158h3v2h-3zM307 174h3v4h-3zM419 277h3v2h-3zM427 268h3v9h-3zM459 301h3v1h-3zM467 296h3v5h-3zM483 306h3v5h-3zM515 339h3v1h-3zM547 345h3v10h-3zM555 339h3v5h-3zM587 339h3v4h-3zM603 339h3v4h-3zM611 330h3v9h-3zM619 318h3v13h-3zM651 321h3v4h-3z" fill="#000"/>
<path d="M59 71h3v11h-3zM75 68h3v6h-3zM83 74h3v3h-3zM91 78h3v9h-3zM99 91h3v3h-3zM107 96h3v11h-3zM123 104h3v6h-3zM131 110h3v3h-3zM179 101h3v14h-3zM187 116h3v4h-3zM203 114h3v14h-3zM219 128h3v9h-3zM227 136h3v7h-3zM243 140h3v3h-3zM251 145h3v10h-3zM267 157h3v2h-3zM283 159h3v7h-3zM291 169h3v7h-3zM299 175h3v4h-3zM315 173h3v1h-3zM323 174h3v3h-3zM331 180h3v2h-3zM339 184h3v15h-3zM347 198h3v2h-3zM355 201h3v4h-3zM363 208h3v7h-3zM371 215h3v1h-3zM379 218h3v1h-3zM387 219h3v12h-3zM395 233h3v15h-3zM403 248h3v18h-3zM411 266h3v11h-3zM435 270h3v19h-3zM443 289h3v11h-3zM451 302h3v1h-3zM475 297h3v15h-3zM499 306h3v25h-3zM507 333h3v8h-3zM523 339h3v2h-3zM531 342h3v9h-3zM571 337h3v1h-3zM579 340h3v2h-3zM595 340h3v4h-3zM635 318h3v6h-3zM659 321h3v11h-3z" fill="#fff"/>
<rect x="9" y="100" width="2" height="60" fill="#000"/>
<rect x="11" y="100" width="1" height="60" fill="#ffffff"/>
<rect x="12" y="332" width="667" height="1" fill="#828d9d"/>
<rect x="681" y="327" width="41" height="11" fill="#ffffff"/>
<path shape-rendering="geometricPrecision" d="M177.7 64.1h5.6v13.4l6.8-6.7v7.8l-9.6 9.1l-9.6-9.1v-7.8l6.8 6.7z" fill="#ffff00"/>
<polygon shape-rendering="geometricPrecision" points="171.60,81.40 173.36,86.47 178.73,86.58 174.45,89.83 176.01,94.97 171.60,91.90 167.19,94.97 168.75,89.83 164.47,86.58 169.84,86.47" fill="#ffff00"/>
<clipPath id="sub"><rect x="12" y="379" width="667" height="172"/></clipPath>
<polyline points="12.5,401.8 20.5,400.8 28.5,399.8 36.5,399.3 44.5,399.3 52.5,398.5 60.5,397.4 68.5,397.2 76.5,401.2 84.5,411.4 92.5,441.2 100.5,490.6 108.5,517.9 116.5,539.3 124.5,541.0 132.5,548.9 140.5,539.3 148.5,526.1 156.5,499.7 164.5,464.1 172.5,416.7 180.5,448.5 188.5,478.2 196.5,501.3 204.5,520.8 212.5,532.7 220.5,539.8 228.5,543.5 236.5,544.0 244.5,543.5 252.5,545.1 260.5,545.0 268.5,545.0 276.5,545.0 284.5,545.3 292.5,546.0 300.5,548.3 308.5,545.1 316.5,538.5 324.5,535.5 332.5,535.2 340.5,535.7 348.5,535.7 356.5,535.7 364.5,541.8 372.5,549.3 380.5,550.0 388.5,550.0 396.5,550.0 404.5,550.0 412.5,550.0 420.5,549.6 428.5,546.0 436.5,545.1 444.5,545.1 452.5,545.1 460.5,542.6 468.5,535.2 476.5,535.2 484.5,536.9 492.5,535.7 500.5,535.2 508.5,535.2 516.5,539.3 524.5,541.5 532.5,541.8 540.5,541.8 548.5,541.8 556.5,521.2 564.5,486.4 572.5,443.6 580.5,452.7 588.5,430.9 596.5,441.2 604.5,451.1 612.5,451.1 620.5,443.6 628.5,427.9 636.5,413.1 644.5,413.1 652.5,418.3 660.5,442.5" fill="none" stroke="#ff0000" stroke-width="2.25" stroke-linejoin="round" clip-path="url(#sub)"/>
<polyline points="12.5,411.4 20.5,407.3 28.5,403.1 36.5,399.5 44.5,397.4 52.5,396.0 60.5,395.7 68.5,395.7 76.5,395.7 84.5,396.0 92.5,398.0 100.5,400.2 108.5,402.4 116.5,405.3 124.5,409.3 132.5,413.1 140.5,418.3 148.5,423.8 156.5,429.6 164.5,435.7 172.5,442.0 180.5,451.1 188.5,462.6 196.5,473.4 204.5,490.2 212.5,505.5 220.5,520.3 228.5,536.9 236.5,542.3 244.5,543.5 252.5,544.3 260.5,544.8 268.5,545.1 276.5,545.1 284.5,545.1 292.5,545.1 300.5,545.1 308.5,545.5 316.5,546.2 324.5,547.3 332.5,547.6 340.5,548.4 348.5,548.8 356.5,549.0 364.5,549.0 372.5,549.0 380.5,549.0 388.5,549.8 396.5,550.0 404.5,550.0 412.5,550.0 420.5,550.0 428.5,550.0 436.5,550.0 444.5,550.2 452.5,550.0 460.5,550.0 468.5,549.0 476.5,548.9 484.5,548.9 492.5,548.9 500.5,549.0 508.5,550.0 516.5,550.0 524.5,550.0 532.5,550.0 540.5,550.0 548.5,549.3 556.5,547.6 564.5,546.4 572.5,545.1 580.5,543.5 588.5,542.1 596.5,541.0 604.5,538.5 612.5,532.6 620.5,526.8 628.5,519.6 636.5,512.0 644.5,502.9 652.5,493.6 660.5,485.0" fill="none" stroke="#00ffff" stroke-width="2.25" stroke-linejoin="round" clip-path="url(#sub)"/>
<polyline points="12.5,411.9 20.5,411.9 28.5,411.9 36.5,411.9 44.5,411.9 52.5,411.9 60.5,411.9 68.5,411.9 76.5,411.9 84.5,411.9 92.5,409.4 100.5,407.2 108.5,405.8 116.5,405.0 124.5,404.2 132.5,404.0 140.5,404.0 148.5,404.3 156.5,405.1 164.5,406.0 172.5,406.9 180.5,408.1 188.5,409.3 196.5,410.1 204.5,410.6 212.5,412.6 220.5,413.6 228.5,415.5 236.5,416.0 244.5,419.2 252.5,422.1 260.5,426.0 268.5,430.1 276.5,434.9 284.5,440.3 292.5,447.8 300.5,456.0 308.5,463.5 316.5,470.8 324.5,479.0 332.5,488.1 340.5,494.7 348.5,502.1 356.5,508.8 364.5,514.5 372.5,519.2 380.5,524.1 388.5,529.4 396.5,534.0 404.5,538.5 412.5,541.8 420.5,544.3 428.5,546.0 436.5,548.9 444.5,549.8 452.5,550.0 460.5,550.0 468.5,550.0 476.5,550.0 484.5,550.0 492.5,550.0 500.5,550.0 508.5,550.0 516.5,550.0 524.5,550.0 532.5,550.0 540.5,550.0 548.5,550.0 556.5,550.0 564.5,550.0 572.5,550.0 580.5,550.0 588.5,550.0 596.5,549.3 604.5,548.9 612.5,548.4 620.5,547.1 628.5,546.3 636.5,545.5 644.5,544.6 652.5,543.5 660.5,543.0" fill="none" stroke="#ffff00" stroke-width="2.25" stroke-linejoin="round" clip-path="url(#sub)"/>
<g shape-rendering="crispEdges"><rect x="10" y="10" width="12" height="9" fill="#4a86f0"/><rect x="11" y="12" width="10" height="6" fill="#fff"/><rect x="13" y="16" width="11" height="8" fill="#4a86f0"/><rect x="14" y="17" width="9" height="6" fill="#fff"/></g><g shape-rendering="geometricPrecision" fill="none" stroke="#3f7df5" stroke-width="1.1"><path d="M15.4 18.4l2.1 3.2l2-3.2l2.1 3.2"/><path d="M12 14.3l1.2-1.2M16.3 13.2l1.4 1.6"/></g><g shape-rendering="crispEdges" fill="#3c9a5a" fill-opacity="0.55"><rect x="12" y="10" width="1" height="1"/><rect x="15" y="10" width="1" height="1"/><rect x="18" y="10" width="1" height="1"/><rect x="10" y="13" width="1" height="1"/><rect x="10" y="16" width="1" height="1"/><rect x="16" y="16" width="1" height="1"/><rect x="19" y="16" width="1" height="1"/><rect x="22" y="16" width="1" height="1"/><rect x="13" y="19" width="1" height="1"/><rect x="13" y="22" width="1" height="1"/><rect x="23" y="19" width="1" height="1"/><rect x="23" y="22" width="1" height="1"/><rect x="16" y="23" width="1" height="1"/><rect x="19" y="23" width="1" height="1"/></g>
<rect x="625.5" y="8.5" width="30" height="17" rx="2.5" fill="url(#bt)" stroke="#5d6e8a" shape-rendering="geometricPrecision"/>
<rect x="626.5" y="9.5" width="28" height="15" rx="1.5" fill="none" stroke="#e6eff9" stroke-opacity="0.55" shape-rendering="geometricPrecision"/>
<rect x="659.5" y="8.5" width="30" height="17" rx="2.5" fill="url(#bt)" stroke="#5d6e8a" shape-rendering="geometricPrecision"/>
<rect x="660.5" y="9.5" width="28" height="15" rx="1.5" fill="none" stroke="#e6eff9" stroke-opacity="0.55" shape-rendering="geometricPrecision"/>
<rect x="693.5" y="8.5" width="31" height="17" rx="2.5" fill="url(#cl)" stroke="#481826" shape-rendering="geometricPrecision"/>
<rect x="694.5" y="9.5" width="29" height="15" rx="1.5" fill="none" stroke="#f3c4b8" stroke-opacity="0.55" shape-rendering="geometricPrecision"/>
<rect x="635.5" y="16.5" width="10" height="4" rx="1" fill="#f4f4f4" stroke="#4a5572"/>
<rect x="669.5" y="12.5" width="10" height="8" rx="1" fill="#f4f4f4" stroke="#4a5572"/><rect x="672.5" y="15.5" width="4" height="2" fill="#8aa6cf" stroke="#4a5572"/>
<path shape-rendering="geometricPrecision" d="M703.5 12.6h3.8l1.2 1.8l1.2-1.8h3.8l-3.2 3.9l3.2 3.9h-3.8l-1.2-1.8l-1.2 1.8h-3.8l3.2-3.9z" fill="#f9f9f9" stroke="#474a5e" stroke-width="1.2" stroke-linejoin="round"/>
<text x="30" y="21.5" font-size="11.8" fill="#000" stroke="#000" stroke-width="0" textLength="57" lengthAdjust="spacingAndGlyphs">USDJPY,M1</text>
<path d="M15 40h7l-3.5 4z" fill="#fff"/>
<text x="27.5" y="45" font-size="9.5" fill="#fff" stroke="#fff" stroke-width="0.2" textLength="51.7" lengthAdjust="spacingAndGlyphs">USDJPY,M1</text>
<text x="85.6" y="45" font-size="9.5" fill="#fff" stroke="#fff" stroke-width="0.2" textLength="32.2" lengthAdjust="spacingAndGlyphs">104.002</text>
<text x="121.5" y="45" font-size="9.5" fill="#fff" stroke="#fff" stroke-width="0.2" textLength="32.2" lengthAdjust="spacingAndGlyphs">104.002</text>
<text x="157.39999999999998" y="45" font-size="9.5" fill="#fff" stroke="#fff" stroke-width="0.2" textLength="32.2" lengthAdjust="spacingAndGlyphs">103.983</text>
<text x="193.29999999999998" y="45" font-size="9.5" fill="#fff" stroke="#fff" stroke-width="0.2" textLength="32.2" lengthAdjust="spacingAndGlyphs">103.986</text>
<text x="685.5" y="62" font-size="9.5" fill="#fff" stroke="#fff" stroke-width="0.2" textLength="32.2" lengthAdjust="spacingAndGlyphs">104.340</text>
<text x="685.5" y="97" font-size="9.5" fill="#fff" stroke="#fff" stroke-width="0.2" textLength="32.2" lengthAdjust="spacingAndGlyphs">104.295</text>
<text x="685.5" y="132" font-size="9.5" fill="#fff" stroke="#fff" stroke-width="0.2" textLength="32.2" lengthAdjust="spacingAndGlyphs">104.250</text>
<text x="685.5" y="166" font-size="9.5" fill="#fff" stroke="#fff" stroke-width="0.2" textLength="32.2" lengthAdjust="spacingAndGlyphs">104.205</text>
<text x="685.5" y="201" font-size="9.5" fill="#fff" stroke="#fff" stroke-width="0.2" textLength="32.2" lengthAdjust="spacingAndGlyphs">104.160</text>
<text x="685.5" y="236" font-size="9.5" fill="#fff" stroke="#fff" stroke-width="0.2" textLength="32.2" lengthAdjust="spacingAndGlyphs">104.115</text>
<text x="685.5" y="271" font-size="9.5" fill="#fff" stroke="#fff" stroke-width="0.2" textLength="32.2" lengthAdjust="spacingAndGlyphs">104.070</text>
<text x="685.5" y="306" font-size="9.5" fill="#fff" stroke="#fff" stroke-width="0.2" textLength="32.2" lengthAdjust="spacingAndGlyphs">104.025</text>
<clipPath id="c98"><rect x="680" y="338" width="45" height="7"/></clipPath>
<text x="685.5" y="341" font-size="9.5" fill="#fff" stroke="#fff" stroke-width="0.2" textLength="32.2" lengthAdjust="spacingAndGlyphs" clip-path="url(#c98)">103.980</text>
<text x="685.5" y="376" font-size="9.5" fill="#fff" stroke="#fff" stroke-width="0.2" textLength="32.2" lengthAdjust="spacingAndGlyphs">103.935</text>
<text x="685.5" y="336" font-size="9.5" fill="#000" stroke="#000" stroke-width="0.2" textLength="32.2" lengthAdjust="spacingAndGlyphs">103.986</text>
<text x="16.5" y="391.3" font-size="9.5" fill="#fff" stroke="#fff" stroke-width="0.2" textLength="111.4" lengthAdjust="spacingAndGlyphs">R(9,26,52) 37.9 -14.1 -89.1</text>
<text x="683.3" y="389" font-size="9.5" fill="#fff" stroke="#fff" stroke-width="0.2" textLength="14.7" lengthAdjust="spacingAndGlyphs">120</text>
<text x="682.4" y="399" font-size="9.5" fill="#fff" stroke="#fff" stroke-width="0.2" textLength="14.2" lengthAdjust="spacingAndGlyphs">100</text>
<text x="682.4" y="415" font-size="9.5" fill="#fff" stroke="#fff" stroke-width="0.2" textLength="9.6" lengthAdjust="spacingAndGlyphs">80</text>
<text x="682.4" y="438" font-size="9.5" fill="#fff" stroke="#fff" stroke-width="0.2" textLength="9.6" lengthAdjust="spacingAndGlyphs">50</text>
<text x="684" y="477" font-size="9.5" fill="#fff" stroke="#fff" stroke-width="0.2" textLength="17.5" lengthAdjust="spacingAndGlyphs">0.00</text>
<text x="682.2" y="516" font-size="9.5" fill="#fff" stroke="#fff" stroke-width="0.2" textLength="12.5" lengthAdjust="spacingAndGlyphs">-50</text>
<text x="682.2" y="539" font-size="9.5" fill="#fff" stroke="#fff" stroke-width="0.2" textLength="12.5" lengthAdjust="spacingAndGlyphs">-80</text>
<text x="683.1" y="548" font-size="9.5" fill="#fff" stroke="#fff" stroke-width="0.2" textLength="17.9" lengthAdjust="spacingAndGlyphs">-100</text>
<text x="11.4" y="564" font-size="9.5" fill="#fff" stroke="#fff" stroke-width="0.2" textLength="53.6" lengthAdjust="spacingAndGlyphs">30 Nov 2020</text>
<text x="75.4" y="564" font-size="9.5" fill="#fff" stroke="#fff" stroke-width="0.2" textLength="56.5" lengthAdjust="spacingAndGlyphs">30 Nov 11:11</text>
<text x="139.4" y="564" font-size="9.5" fill="#fff" stroke="#fff" stroke-width="0.2" textLength="56.5" lengthAdjust="spacingAndGlyphs">30 Nov 11:19</text>
<text x="203.4" y="564" font-size="9.5" fill="#fff" stroke="#fff" stroke-width="0.2" textLength="56.5" lengthAdjust="spacingAndGlyphs">30 Nov 11:27</text>
<text x="267.4" y="564" font-size="9.5" fill="#fff" stroke="#fff" stroke-width="0.2" textLength="56.5" lengthAdjust="spacingAndGlyphs">30 Nov 11:35</text>
<text x="331.4" y="564" font-size="9.5" fill="#fff" stroke="#fff" stroke-width="0.2" textLength="56.5" lengthAdjust="spacingAndGlyphs">30 Nov 11:43</text>
<text x="395.4" y="564" font-size="9.5" fill="#fff" stroke="#fff" stroke-width="0.2" textLength="56.5" lengthAdjust="spacingAndGlyphs">30 Nov 11:51</text>
<text x="459.4" y="564" font-size="9.5" fill="#fff" stroke="#fff" stroke-width="0.2" textLength="56.5" lengthAdjust="spacingAndGlyphs">30 Nov 11:59</text>
<text x="523.4" y="564" font-size="9.5" fill="#fff" stroke="#fff" stroke-width="0.2" textLength="56.5" lengthAdjust="spacingAndGlyphs">30 Nov 12:07</text>
<text x="587.4" y="564" font-size="9.5" fill="#fff" stroke="#fff" stroke-width="0.2" textLength="56.5" lengthAdjust="spacingAndGlyphs">30 Nov 12:15</text>
<text x="651.4" y="564" font-size="9.5" fill="#fff" stroke="#fff" stroke-width="0.2" textLength="56.5" lengthAdjust="spacingAndGlyphs">30 Nov 12:23</text>
</svg>
</body></html>
